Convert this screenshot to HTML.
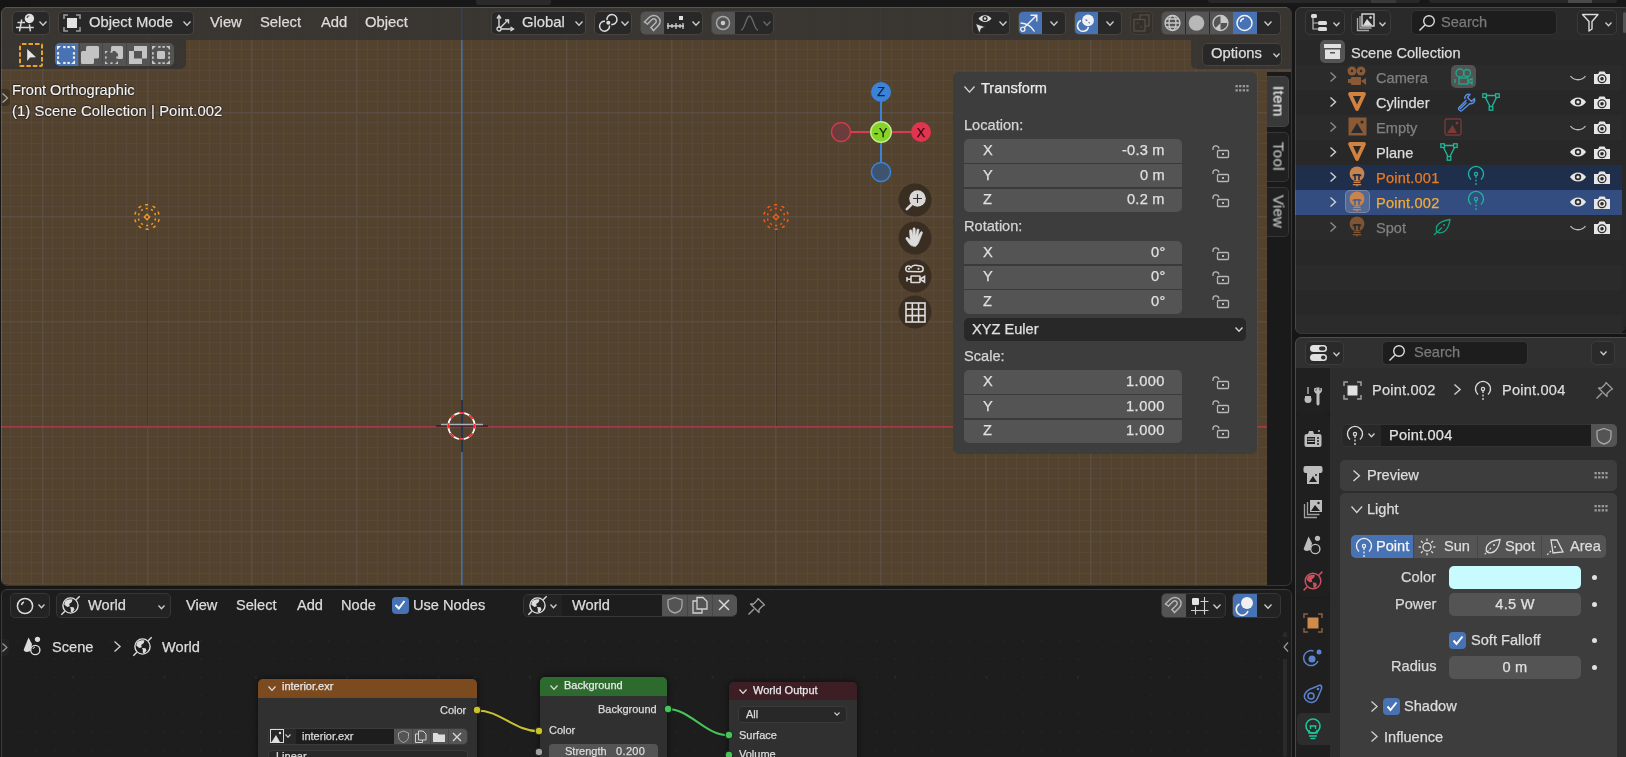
<!DOCTYPE html>
<html><head><meta charset="utf-8">
<style>
*{box-sizing:border-box;margin:0;padding:0}
html,body{width:1626px;height:757px;overflow:hidden;background:#161616;font-family:"Liberation Sans",sans-serif;color:#dcdcdc;font-size:14.8px}
.a{position:absolute}
.t{position:absolute;white-space:nowrap;line-height:1;will-change:transform;-webkit-text-stroke:0.25px currentColor}
svg{position:absolute;overflow:visible}
</style></head><body>
<div class="a" style="left:0px;top:0px;width:1626px;height:7px;background:#181818;"></div>
<div class="a" style="left:1px;top:7px;width:1290px;height:578px;border-radius:7px;overflow:hidden;background:#53422e"><svg width="1290" height="578" style="left:0;top:0"><rect x="9" y="0" width="1" height="578" fill="#57483a"/><rect x="20" y="0" width="1" height="578" fill="#57483a"/><rect x="30" y="0" width="1" height="578" fill="#57483a"/><rect x="51" y="0" width="1" height="578" fill="#57483a"/><rect x="62" y="0" width="1" height="578" fill="#57483a"/><rect x="72" y="0" width="1" height="578" fill="#57483a"/><rect x="83" y="0" width="1" height="578" fill="#57483a"/><rect x="93" y="0" width="1" height="578" fill="#57483a"/><rect x="104" y="0" width="1" height="578" fill="#57483a"/><rect x="114" y="0" width="1" height="578" fill="#57483a"/><rect x="125" y="0" width="1" height="578" fill="#57483a"/><rect x="135" y="0" width="1" height="578" fill="#57483a"/><rect x="156" y="0" width="1" height="578" fill="#57483a"/><rect x="167" y="0" width="1" height="578" fill="#57483a"/><rect x="177" y="0" width="1" height="578" fill="#57483a"/><rect x="188" y="0" width="1" height="578" fill="#57483a"/><rect x="198" y="0" width="1" height="578" fill="#57483a"/><rect x="208" y="0" width="1" height="578" fill="#57483a"/><rect x="219" y="0" width="1" height="578" fill="#57483a"/><rect x="229" y="0" width="1" height="578" fill="#57483a"/><rect x="240" y="0" width="1" height="578" fill="#57483a"/><rect x="261" y="0" width="1" height="578" fill="#57483a"/><rect x="271" y="0" width="1" height="578" fill="#57483a"/><rect x="282" y="0" width="1" height="578" fill="#57483a"/><rect x="292" y="0" width="1" height="578" fill="#57483a"/><rect x="303" y="0" width="1" height="578" fill="#57483a"/><rect x="313" y="0" width="1" height="578" fill="#57483a"/><rect x="324" y="0" width="1" height="578" fill="#57483a"/><rect x="334" y="0" width="1" height="578" fill="#57483a"/><rect x="345" y="0" width="1" height="578" fill="#57483a"/><rect x="366" y="0" width="1" height="578" fill="#57483a"/><rect x="376" y="0" width="1" height="578" fill="#57483a"/><rect x="387" y="0" width="1" height="578" fill="#57483a"/><rect x="397" y="0" width="1" height="578" fill="#57483a"/><rect x="408" y="0" width="1" height="578" fill="#57483a"/><rect x="418" y="0" width="1" height="578" fill="#57483a"/><rect x="429" y="0" width="1" height="578" fill="#57483a"/><rect x="439" y="0" width="1" height="578" fill="#57483a"/><rect x="450" y="0" width="1" height="578" fill="#57483a"/><rect x="470" y="0" width="1" height="578" fill="#57483a"/><rect x="481" y="0" width="1" height="578" fill="#57483a"/><rect x="491" y="0" width="1" height="578" fill="#57483a"/><rect x="502" y="0" width="1" height="578" fill="#57483a"/><rect x="512" y="0" width="1" height="578" fill="#57483a"/><rect x="523" y="0" width="1" height="578" fill="#57483a"/><rect x="533" y="0" width="1" height="578" fill="#57483a"/><rect x="544" y="0" width="1" height="578" fill="#57483a"/><rect x="554" y="0" width="1" height="578" fill="#57483a"/><rect x="575" y="0" width="1" height="578" fill="#57483a"/><rect x="586" y="0" width="1" height="578" fill="#57483a"/><rect x="596" y="0" width="1" height="578" fill="#57483a"/><rect x="607" y="0" width="1" height="578" fill="#57483a"/><rect x="617" y="0" width="1" height="578" fill="#57483a"/><rect x="628" y="0" width="1" height="578" fill="#57483a"/><rect x="638" y="0" width="1" height="578" fill="#57483a"/><rect x="649" y="0" width="1" height="578" fill="#57483a"/><rect x="659" y="0" width="1" height="578" fill="#57483a"/><rect x="680" y="0" width="1" height="578" fill="#57483a"/><rect x="691" y="0" width="1" height="578" fill="#57483a"/><rect x="701" y="0" width="1" height="578" fill="#57483a"/><rect x="712" y="0" width="1" height="578" fill="#57483a"/><rect x="722" y="0" width="1" height="578" fill="#57483a"/><rect x="732" y="0" width="1" height="578" fill="#57483a"/><rect x="743" y="0" width="1" height="578" fill="#57483a"/><rect x="753" y="0" width="1" height="578" fill="#57483a"/><rect x="764" y="0" width="1" height="578" fill="#57483a"/><rect x="785" y="0" width="1" height="578" fill="#57483a"/><rect x="795" y="0" width="1" height="578" fill="#57483a"/><rect x="806" y="0" width="1" height="578" fill="#57483a"/><rect x="816" y="0" width="1" height="578" fill="#57483a"/><rect x="827" y="0" width="1" height="578" fill="#57483a"/><rect x="837" y="0" width="1" height="578" fill="#57483a"/><rect x="848" y="0" width="1" height="578" fill="#57483a"/><rect x="858" y="0" width="1" height="578" fill="#57483a"/><rect x="869" y="0" width="1" height="578" fill="#57483a"/><rect x="890" y="0" width="1" height="578" fill="#57483a"/><rect x="900" y="0" width="1" height="578" fill="#57483a"/><rect x="911" y="0" width="1" height="578" fill="#57483a"/><rect x="921" y="0" width="1" height="578" fill="#57483a"/><rect x="932" y="0" width="1" height="578" fill="#57483a"/><rect x="942" y="0" width="1" height="578" fill="#57483a"/><rect x="953" y="0" width="1" height="578" fill="#57483a"/><rect x="963" y="0" width="1" height="578" fill="#57483a"/><rect x="974" y="0" width="1" height="578" fill="#57483a"/><rect x="994" y="0" width="1" height="578" fill="#57483a"/><rect x="1005" y="0" width="1" height="578" fill="#57483a"/><rect x="1015" y="0" width="1" height="578" fill="#57483a"/><rect x="1026" y="0" width="1" height="578" fill="#57483a"/><rect x="1036" y="0" width="1" height="578" fill="#57483a"/><rect x="1047" y="0" width="1" height="578" fill="#57483a"/><rect x="1057" y="0" width="1" height="578" fill="#57483a"/><rect x="1068" y="0" width="1" height="578" fill="#57483a"/><rect x="1078" y="0" width="1" height="578" fill="#57483a"/><rect x="1099" y="0" width="1" height="578" fill="#57483a"/><rect x="1110" y="0" width="1" height="578" fill="#57483a"/><rect x="1120" y="0" width="1" height="578" fill="#57483a"/><rect x="1131" y="0" width="1" height="578" fill="#57483a"/><rect x="1141" y="0" width="1" height="578" fill="#57483a"/><rect x="1152" y="0" width="1" height="578" fill="#57483a"/><rect x="1162" y="0" width="1" height="578" fill="#57483a"/><rect x="1173" y="0" width="1" height="578" fill="#57483a"/><rect x="1183" y="0" width="1" height="578" fill="#57483a"/><rect x="1204" y="0" width="1" height="578" fill="#57483a"/><rect x="1215" y="0" width="1" height="578" fill="#57483a"/><rect x="1225" y="0" width="1" height="578" fill="#57483a"/><rect x="1236" y="0" width="1" height="578" fill="#57483a"/><rect x="1246" y="0" width="1" height="578" fill="#57483a"/><rect x="1256" y="0" width="1" height="578" fill="#57483a"/><rect x="1267" y="0" width="1" height="578" fill="#57483a"/><rect x="1277" y="0" width="1" height="578" fill="#57483a"/><rect x="1288" y="0" width="1" height="578" fill="#57483a"/><rect x="0" y="10" width="1290" height="1" fill="#57483a"/><rect x="0" y="21" width="1290" height="1" fill="#57483a"/><rect x="0" y="31" width="1290" height="1" fill="#57483a"/><rect x="0" y="42" width="1290" height="1" fill="#57483a"/><rect x="0" y="52" width="1290" height="1" fill="#57483a"/><rect x="0" y="63" width="1290" height="1" fill="#57483a"/><rect x="0" y="73" width="1290" height="1" fill="#57483a"/><rect x="0" y="84" width="1290" height="1" fill="#57483a"/><rect x="0" y="94" width="1290" height="1" fill="#57483a"/><rect x="0" y="115" width="1290" height="1" fill="#57483a"/><rect x="0" y="126" width="1290" height="1" fill="#57483a"/><rect x="0" y="136" width="1290" height="1" fill="#57483a"/><rect x="0" y="147" width="1290" height="1" fill="#57483a"/><rect x="0" y="157" width="1290" height="1" fill="#57483a"/><rect x="0" y="167" width="1290" height="1" fill="#57483a"/><rect x="0" y="178" width="1290" height="1" fill="#57483a"/><rect x="0" y="188" width="1290" height="1" fill="#57483a"/><rect x="0" y="199" width="1290" height="1" fill="#57483a"/><rect x="0" y="220" width="1290" height="1" fill="#57483a"/><rect x="0" y="230" width="1290" height="1" fill="#57483a"/><rect x="0" y="241" width="1290" height="1" fill="#57483a"/><rect x="0" y="251" width="1290" height="1" fill="#57483a"/><rect x="0" y="262" width="1290" height="1" fill="#57483a"/><rect x="0" y="272" width="1290" height="1" fill="#57483a"/><rect x="0" y="283" width="1290" height="1" fill="#57483a"/><rect x="0" y="293" width="1290" height="1" fill="#57483a"/><rect x="0" y="304" width="1290" height="1" fill="#57483a"/><rect x="0" y="325" width="1290" height="1" fill="#57483a"/><rect x="0" y="335" width="1290" height="1" fill="#57483a"/><rect x="0" y="346" width="1290" height="1" fill="#57483a"/><rect x="0" y="356" width="1290" height="1" fill="#57483a"/><rect x="0" y="367" width="1290" height="1" fill="#57483a"/><rect x="0" y="377" width="1290" height="1" fill="#57483a"/><rect x="0" y="388" width="1290" height="1" fill="#57483a"/><rect x="0" y="398" width="1290" height="1" fill="#57483a"/><rect x="0" y="409" width="1290" height="1" fill="#57483a"/><rect x="0" y="429" width="1290" height="1" fill="#57483a"/><rect x="0" y="440" width="1290" height="1" fill="#57483a"/><rect x="0" y="450" width="1290" height="1" fill="#57483a"/><rect x="0" y="461" width="1290" height="1" fill="#57483a"/><rect x="0" y="471" width="1290" height="1" fill="#57483a"/><rect x="0" y="482" width="1290" height="1" fill="#57483a"/><rect x="0" y="492" width="1290" height="1" fill="#57483a"/><rect x="0" y="503" width="1290" height="1" fill="#57483a"/><rect x="0" y="513" width="1290" height="1" fill="#57483a"/><rect x="0" y="534" width="1290" height="1" fill="#57483a"/><rect x="0" y="545" width="1290" height="1" fill="#57483a"/><rect x="0" y="555" width="1290" height="1" fill="#57483a"/><rect x="0" y="566" width="1290" height="1" fill="#57483a"/><rect x="0" y="576" width="1290" height="1" fill="#57483a"/><rect x="0" y="587" width="1290" height="1" fill="#57483a"/><rect x="41" y="0" width="1.5" height="578" fill="#5a4e43"/><rect x="146" y="0" width="1.5" height="578" fill="#5a4e43"/><rect x="250" y="0" width="1.5" height="578" fill="#5a4e43"/><rect x="355" y="0" width="1.5" height="578" fill="#5a4e43"/><rect x="460" y="0" width="1.5" height="578" fill="#5a4e43"/><rect x="565" y="0" width="1.5" height="578" fill="#5a4e43"/><rect x="670" y="0" width="1.5" height="578" fill="#5a4e43"/><rect x="774" y="0" width="1.5" height="578" fill="#5a4e43"/><rect x="879" y="0" width="1.5" height="578" fill="#5a4e43"/><rect x="984" y="0" width="1.5" height="578" fill="#5a4e43"/><rect x="1089" y="0" width="1.5" height="578" fill="#5a4e43"/><rect x="1194" y="0" width="1.5" height="578" fill="#5a4e43"/><rect x="1298" y="0" width="1.5" height="578" fill="#5a4e43"/><rect x="0" y="0" width="1290" height="1.5" fill="#5a4e43"/><rect x="0" y="105" width="1290" height="1.5" fill="#5a4e43"/><rect x="0" y="209" width="1290" height="1.5" fill="#5a4e43"/><rect x="0" y="314" width="1290" height="1.5" fill="#5a4e43"/><rect x="0" y="419" width="1290" height="1.5" fill="#5a4e43"/><rect x="0" y="524" width="1290" height="1.5" fill="#5a4e43"/><rect x="460" y="0" width="1.6" height="578" fill="#4070a8"/><rect x="0" y="419" width="1290" height="1.5" fill="#a03c4c"/></svg></div>
<div class="a" style="left:476px;top:0px;width:75px;height:5px;background:#2a2a2a;border-radius:0 0 2px 2px;"></div>
<div class="a" style="left:0px;top:0px;width:31px;height:7px;background:#151515;"></div>
<div class="a" style="left:1208px;top:0px;width:212px;height:3px;background:#282828;border-radius:0 0 3px 3px;"></div>
<div class="a" style="left:1429px;top:0px;width:188px;height:3px;background:#282828;border-radius:0 0 3px 3px;"></div>
<div class="a" style="left:1371px;top:0px;width:25px;height:3px;background:#3a3a3a;"></div>
<div class="a" style="left:1568px;top:0px;width:24px;height:3px;background:#4a4a4a;"></div>
<div class="a" style="left:1px;top:7px;width:1290px;height:33px;background:rgba(49,49,49,0.74);border-radius:7px 7px 0 0;"></div>
<div class="a" style="left:12px;top:10.5px;width:38px;height:24px;background:#282828;border-radius:5px;border:1px solid #47443f;"></div>
<svg style="left:16px;top:13px;" width="20" height="20" viewBox="0 0 20 20"><g stroke="#d8d8d8" stroke-width="1.5" fill="none"><path d="M1.5 9.5 H9 M0 14.4 H17.8 M5.7 6.5 L3.5 18.4 M13.4 11.4 L14.4 18.4"/></g><circle cx="13.4" cy="5.5" r="4.7" fill="#e2e2e2"/><path d="M11 5 q0.3 -2 2.3 -2.3" stroke="#444" stroke-width="1.1" fill="none"/></svg>
<svg style="left:39px;top:21px;" width="8" height="4.8" viewBox="0 0 8 4.8"><path d="M0.5 0.5 L4.0 4.3 L7.5 0.5" fill="none" stroke="#cfcfcf" stroke-width="1.3"/></svg>
<div class="a" style="left:58px;top:10.5px;width:136px;height:24px;background:#282828;border-radius:5px;border:1px solid #47443f;"></div>
<svg style="left:63px;top:14px;" width="18" height="18" viewBox="0 0 18 18"><g fill="none" stroke="#9a9a9a" stroke-width="1.6"><path d="M1 5 V1 H5 M13 1 H17 V5 M17 13 V17 H13 M5 17 H1 V13"/></g><rect x="4" y="4" width="10" height="10" fill="#e2e2e2"/></svg>
<div class="t" style="left:89.0px;top:15.07px;font-size:14.8px;color:#dcdcdc;">Object Mode</div>
<svg style="left:183px;top:21px;" width="8" height="4.8" viewBox="0 0 8 4.8"><path d="M0.5 0.5 L4.0 4.3 L7.5 0.5" fill="none" stroke="#cfcfcf" stroke-width="1.3"/></svg>
<div class="t" style="left:210.0px;top:15.07px;font-size:14.8px;color:#dcdcdc;">View</div>
<div class="t" style="left:260.0px;top:15.07px;font-size:14.8px;color:#dcdcdc;">Select</div>
<div class="t" style="left:321.0px;top:15.07px;font-size:14.8px;color:#dcdcdc;">Add</div>
<div class="t" style="left:365.0px;top:15.07px;font-size:14.8px;color:#dcdcdc;">Object</div>
<div class="a" style="left:491px;top:10.5px;width:95px;height:24px;background:#282828;border-radius:5px;border:1px solid #47443f;"></div>
<svg style="left:496px;top:14px;" width="19" height="18" viewBox="0 0 19 18"><g stroke="#d8d8d8" stroke-width="1.4" fill="none"><path d="M3 15 V2 M3 15 H17 M3 15 L12 6"/><path d="M1 4.5 L3 1.5 L5 4.5 M14.5 13 L17.5 15 L14.5 17 M9 6 H12.5 V9.5"/></g><circle cx="3" cy="15" r="2" fill="#282828" stroke="#d8d8d8" stroke-width="1.3"/></svg>
<div class="t" style="left:522.0px;top:15.07px;font-size:14.8px;color:#dcdcdc;">Global</div>
<svg style="left:575px;top:21px;" width="8" height="4.8" viewBox="0 0 8 4.8"><path d="M0.5 0.5 L4.0 4.3 L7.5 0.5" fill="none" stroke="#cfcfcf" stroke-width="1.3"/></svg>
<div class="a" style="left:594px;top:10.5px;width:38px;height:24px;background:#282828;border-radius:5px;border:1px solid #47443f;"></div>
<svg style="left:599px;top:14px;" width="19" height="18" viewBox="0 0 19 18"><g stroke="#dcdcdc" stroke-width="1.5" fill="none"><path d="M8 6.2 A5 5 0 1 1 12.2 10.5"/><path d="M10.5 11.5 A5 5 0 1 1 6 7.2"/></g><circle cx="9.3" cy="8.8" r="2" fill="#dcdcdc"/></svg>
<svg style="left:621px;top:21px;" width="8" height="4.8" viewBox="0 0 8 4.8"><path d="M0.5 0.5 L4.0 4.3 L7.5 0.5" fill="none" stroke="#cfcfcf" stroke-width="1.3"/></svg>
<div class="a" style="left:640px;top:10.5px;width:63px;height:24px;background:#282828;border-radius:5px;border:1px solid #47443f;"></div>
<div class="a" style="left:641px;top:11.5px;width:23px;height:22px;background:#545454;border-radius:4px 0 0 4px;"></div>
<svg style="left:643px;top:14px;" width="19" height="18" viewBox="0 0 19 18"><g transform="translate(19,0) scale(-1,1)"><path d="M8.5 16.5 L3.8 11.8 C1 9 1.5 5 4 3 C6.5 0.8 10.5 1 13 3.5 L17.5 8 M11 13.5 L6.5 9 C5.5 8 5.5 6.5 6.5 5.5 C7.5 4.5 9 4.5 10 5.5 L14.5 10" fill="none" stroke="#b4b4b4" stroke-width="1.5" stroke-linecap="round"/><path d="M8.5 16.5 L11 13.5 M17.5 8 L14.5 10" stroke="#b4b4b4" stroke-width="1.5" stroke-linecap="round"/></g></svg>
<svg style="left:666px;top:14px;" width="19" height="18" viewBox="0 0 19 18"><g stroke="#d0d0d0" stroke-width="1.3" fill="none"><path d="M1 12 H18 M2 9 V15 M6 10 V14 M10 9 V15 M14 10 V14 M17 9 V15"/></g><rect x="13" y="2" width="4" height="4" fill="#e0e0e0"/></svg>
<svg style="left:692px;top:21px;" width="8" height="4.8" viewBox="0 0 8 4.8"><path d="M0.5 0.5 L4.0 4.3 L7.5 0.5" fill="none" stroke="#cfcfcf" stroke-width="1.3"/></svg>
<div class="a" style="left:711px;top:10.5px;width:63px;height:24px;background:#282828;border-radius:5px;border:1px solid #47443f;"></div>
<div class="a" style="left:712px;top:11.5px;width:23px;height:22px;background:#545454;border-radius:4px 0 0 4px;"></div>
<svg style="left:714px;top:14px;" width="18" height="18" viewBox="0 0 18 18"><circle cx="9" cy="9" r="6.5" fill="none" stroke="#a8a8a8" stroke-width="1.5"/><circle cx="9" cy="9" r="2.3" fill="#c8c8c8"/></svg>
<svg style="left:740px;top:14px;" width="19" height="18" viewBox="0 0 19 18"><path d="M1 16 C5 16 6 2 9.5 2 C13 2 14 16 18 16" fill="none" stroke="#6a6a6a" stroke-width="1.4"/></svg>
<svg style="left:763px;top:21px;" width="8" height="4.8" viewBox="0 0 8 4.8"><path d="M0.5 0.5 L4.0 4.3 L7.5 0.5" fill="none" stroke="#6a6a6a" stroke-width="1.3"/></svg>
<div class="a" style="left:972px;top:10.5px;width:38px;height:24px;background:#282828;border-radius:5px;border:1px solid #47443f;"></div>
<svg style="left:975px;top:13px;" width="20" height="20" viewBox="0 0 20 20"><path d="M3.5 5.5 C6.5 1 13.5 1 16.5 5.5 C13.5 10 6.5 10 3.5 5.5 Z" fill="#dcdcdc"/><circle cx="10" cy="5.5" r="2.6" fill="#282828"/><circle cx="10" cy="5.5" r="1.2" fill="#dcdcdc"/><path d="M0.5 10.5 L10.5 14 L6.3 15.5 L4.3 20.5 Z" fill="#dcdcdc" stroke="#282828" stroke-width="0.8"/></svg>
<svg style="left:999px;top:21px;" width="8" height="4.8" viewBox="0 0 8 4.8"><path d="M0.5 0.5 L4.0 4.3 L7.5 0.5" fill="none" stroke="#cfcfcf" stroke-width="1.3"/></svg>
<div class="a" style="left:1018px;top:10.5px;width:48px;height:24px;background:#282828;border-radius:5px;border:1px solid #47443f;"></div>
<div class="a" style="left:1019px;top:11.5px;width:23px;height:22px;background:#4772b3;border-radius:4px 0 0 4px;"></div>
<svg style="left:1021px;top:14px;" width="18" height="18" viewBox="0 0 18 18"><g stroke="#f0f0f0" stroke-width="1.4" fill="none"><path d="M-0.5 9 A17 17 0 0 1 13.5 17.5"/><path d="M3.3 13.5 L15.5 1.5 M9.5 1.2 H15.8 V7.5"/></g><circle cx="1.8" cy="15.2" r="2.1" fill="#4772b3" stroke="#f0f0f0" stroke-width="1.3"/></svg>
<svg style="left:1050px;top:21px;" width="8" height="4.8" viewBox="0 0 8 4.8"><path d="M0.5 0.5 L4.0 4.3 L7.5 0.5" fill="none" stroke="#cfcfcf" stroke-width="1.3"/></svg>
<div class="a" style="left:1074px;top:10.5px;width:48px;height:24px;background:#282828;border-radius:5px;border:1px solid #47443f;"></div>
<div class="a" style="left:1075px;top:11.5px;width:23px;height:22px;background:#4772b3;border-radius:4px 0 0 4px;"></div>
<svg style="left:1076px;top:13px;" width="20" height="20" viewBox="0 0 20 20"><path d="M5 7.5 A5.6 5.6 0 1 0 12.5 14" fill="none" stroke="#f0f0f0" stroke-width="1.5"/><circle cx="12" cy="7.4" r="5.9" fill="#f0f0f0"/><path d="M9.5 6.5 l1.8 1.2 M12.5 9.5 l1.5 0.5" stroke="#4772b3" stroke-width="1.1"/></svg>
<svg style="left:1106px;top:21px;" width="8" height="4.8" viewBox="0 0 8 4.8"><path d="M0.5 0.5 L4.0 4.3 L7.5 0.5" fill="none" stroke="#cfcfcf" stroke-width="1.3"/></svg>
<div class="a" style="left:1130px;top:10.5px;width:23px;height:24px;background:#35302a;border-radius:5px;border:1px solid #423e39;"></div>
<svg style="left:1133px;top:14px;" width="17" height="18" viewBox="0 0 17 18"><g fill="none" stroke="#55514c" stroke-width="1.2"><path d="M7 5 V1 H16 V12 H12"/><rect x="1" y="5.5" width="11" height="11.5"/></g><g fill="#55514c"><rect x="4" y="8.5" width="1.3" height="1.3"/><rect x="7.5" y="12.5" width="1.3" height="1.3"/></g></svg>
<div class="a" style="left:1161px;top:10.5px;width:120px;height:24px;background:#282828;border-radius:5px;border:1px solid #47443f;"></div>
<div class="a" style="left:1162px;top:11.5px;width:23px;height:22px;background:#545454;border-radius:4px 0 0 4px;"></div>
<div class="a" style="left:1186px;top:11.5px;width:23px;height:22px;background:#545454;"></div>
<div class="a" style="left:1210px;top:11.5px;width:23px;height:22px;background:#545454;"></div>
<div class="a" style="left:1233px;top:11.5px;width:24px;height:22px;background:#4772b3;"></div>
<svg style="left:1163px;top:14px;" width="19" height="18" viewBox="0 0 19 18"><g fill="none" stroke="#c8c8c8" stroke-width="1.3"><circle cx="9.5" cy="9" r="7.5"/><ellipse cx="9.5" cy="9" rx="3.5" ry="7.5"/><path d="M2 9 H17 M3 5 H16 M3 13 H16"/></g></svg>
<svg style="left:1187px;top:14px;" width="19" height="18" viewBox="0 0 19 18"><circle cx="9.5" cy="9" r="7.8" fill="#b8b8b8"/></svg>
<svg style="left:1211px;top:14px;" width="19" height="18" viewBox="0 0 19 18"><circle cx="9.5" cy="9" r="7.5" fill="none" stroke="#c8c8c8" stroke-width="1.3"/><path d="M9.5 1.5 V9 H17 A7.5 7.5 0 0 0 9.5 1.5Z M9.5 9 L4 14.5 A7.5 7.5 0 0 0 9.5 16.5 Z" fill="#c8c8c8"/></svg>
<svg style="left:1235px;top:14px;" width="19" height="18" viewBox="0 0 19 18"><circle cx="9.5" cy="9" r="7.5" fill="none" stroke="#f4f4f4" stroke-width="1.5"/><path d="M5.5 8 A4 4 0 0 1 9 4.5" fill="none" stroke="#f4f4f4" stroke-width="1.5"/></svg>
<svg style="left:1264px;top:21px;" width="8" height="4.8" viewBox="0 0 8 4.8"><path d="M0.5 0.5 L4.0 4.3 L7.5 0.5" fill="none" stroke="#cfcfcf" stroke-width="1.3"/></svg>
<div class="a" style="left:1px;top:40px;width:185px;height:29px;background:rgba(49,49,49,0.74);border-radius:0 0 6px 0;"></div>
<svg style="left:19px;top:43px;" width="24" height="24" viewBox="0 0 24 24"><rect x="1" y="1" width="22" height="22" rx="1" fill="none" stroke="#e9a12a" stroke-width="2" stroke-dasharray="4.5 2" stroke-dashoffset="-1"/><path d="M8.2 6 V18 L11 14.5 L17 14.3 Z" fill="#e6e6e6"/></svg>
<div class="a" style="left:55px;top:43px;width:119px;height:23px;background:#545454;border-radius:5px;"></div>
<div class="a" style="left:55px;top:43px;width:23px;height:23px;background:#4772b3;border-radius:5px 0 0 5px;"></div>
<div class="a" style="left:78.7px;top:43px;width:1px;height:23px;background:#474747;"></div>
<div class="a" style="left:102.4px;top:43px;width:1px;height:23px;background:#474747;"></div>
<div class="a" style="left:126.1px;top:43px;width:1px;height:23px;background:#474747;"></div>
<div class="a" style="left:149.8px;top:43px;width:1px;height:23px;background:#474747;"></div>
<svg style="left:57px;top:46px;" width="18" height="18" viewBox="0 0 18 18"><path d="M0 0 H4.0 L0 4.0 Z" fill="#f0f0f0"/><path d="M18 0 V4.0 L14.0 0 Z" fill="#f0f0f0"/><path d="M18 18 H14.0 L18 14.0 Z" fill="#f0f0f0"/><path d="M0 18 V14.0 L4.0 18 Z" fill="#f0f0f0"/><rect x="6.20" y="0" width="2.40" height="2.1" fill="#f0f0f0"/><rect x="6.20" y="15.90" width="2.40" height="2.1" fill="#f0f0f0"/><rect x="0" y="6.20" width="2.1" height="2.40" fill="#f0f0f0"/><rect x="15.90" y="6.20" width="2.1" height="2.40" fill="#f0f0f0"/><rect x="10.40" y="0" width="2.40" height="2.1" fill="#f0f0f0"/><rect x="10.40" y="15.90" width="2.40" height="2.1" fill="#f0f0f0"/><rect x="0" y="10.40" width="2.1" height="2.40" fill="#f0f0f0"/><rect x="15.90" y="10.40" width="2.1" height="2.40" fill="#f0f0f0"/></svg>
<svg style="left:81px;top:46px;" width="18" height="18" viewBox="0 0 18 18"><path d="M5 1.5 Q5 0 6.5 0 H16.5 Q18 0 18 1.5 V11 Q18 12.5 16.5 12.5 H13 V16.5 Q13 18 11.5 18 H1.5 Q0 18 0 16.5 V6.5 Q0 5 1.5 5 H5 Z" fill="#c4c4c4"/></svg>
<svg style="left:105px;top:46px;" width="18" height="18" viewBox="0 0 18 18"><path d="M6 1.5 Q6 0 7.5 0 H16.5 Q18 0 18 1.5 V11.5 Q18 13 16.5 13 H13 V5 H6 Z" fill="#c4c4c4"/><g transform="translate(0,5)"><path d="M0 0 H3.0 L0 3.0 Z" fill="#c4c4c4"/><path d="M13 0 V3.0 L10.0 0 Z" fill="#c4c4c4"/><path d="M13 13 H10.0 L13 10.0 Z" fill="#c4c4c4"/><path d="M0 13 V10.0 L3.0 13 Z" fill="#c4c4c4"/><rect x="5.42" y="0" width="2.17" height="1.7" fill="#c4c4c4"/><rect x="5.42" y="11.30" width="2.17" height="1.7" fill="#c4c4c4"/><rect x="0" y="5.42" width="1.7" height="2.17" fill="#c4c4c4"/><rect x="11.30" y="5.42" width="1.7" height="2.17" fill="#c4c4c4"/></g></svg>
<svg style="left:129px;top:46px;" width="18" height="18" viewBox="0 0 18 18"><path d="M5 0 H18 V12.5 H13 V5 H5 Z M0 5 H5 V12.5 H13 V18 H0 Z" fill="#c4c4c4"/></svg>
<svg style="left:152px;top:46px;" width="18" height="18" viewBox="0 0 18 18"><path d="M0 0 H4.0 L0 4.0 Z" fill="#c4c4c4"/><path d="M18 0 V4.0 L14.0 0 Z" fill="#c4c4c4"/><path d="M18 18 H14.0 L18 14.0 Z" fill="#c4c4c4"/><path d="M0 18 V14.0 L4.0 18 Z" fill="#c4c4c4"/><rect x="6.20" y="0" width="2.40" height="1.8" fill="#c4c4c4"/><rect x="6.20" y="16.20" width="2.40" height="1.8" fill="#c4c4c4"/><rect x="0" y="6.20" width="1.8" height="2.40" fill="#c4c4c4"/><rect x="16.20" y="6.20" width="1.8" height="2.40" fill="#c4c4c4"/><rect x="10.40" y="0" width="2.40" height="1.8" fill="#c4c4c4"/><rect x="10.40" y="16.20" width="2.40" height="1.8" fill="#c4c4c4"/><rect x="0" y="10.40" width="1.8" height="2.40" fill="#c4c4c4"/><rect x="16.20" y="10.40" width="1.8" height="2.40" fill="#c4c4c4"/><rect x="5" y="5" width="8" height="8" rx="1.2" fill="#c4c4c4"/></svg>
<div class="a" style="left:1191px;top:40px;width:100px;height:29px;background:rgba(49,49,49,0.74);border-radius:0 0 0 6px;"></div>
<div class="a" style="left:1202px;top:43px;width:80px;height:23px;background:#282828;border-radius:5px;border:1px solid #47443f;"></div>
<div class="t" style="left:1211.0px;top:46.47px;font-size:14.8px;color:#dcdcdc;">Options</div>
<svg style="left:1273px;top:53px;" width="7" height="4.2" viewBox="0 0 7 4.2"><path d="M0.5 0.5 L3.5 3.7 L6.5 0.5" fill="none" stroke="#cfcfcf" stroke-width="1.3"/></svg>
<div class="t" style="left:12.0px;top:82.64px;font-size:14.6px;color:#f4f4f4;text-shadow:0 0 1px #000,0 0 1px #000,0 0 2px #000;-webkit-text-stroke:0.2px #f4f4f4">Front Orthographic</div>
<div class="t" style="left:12.0px;top:104.17px;font-size:14.8px;color:#f4f4f4;letter-spacing:0.08px;text-shadow:0 0 1px #000,0 0 1px #000,0 0 2px #000;-webkit-text-stroke:0.2px #f4f4f4">(1) Scene Collection | Point.002</div>
<div class="a" style="left:1px;top:89px;width:9px;height:16.5px;background:rgba(30,24,18,0.35);border-radius:0 4px 4px 0;"></div>
<svg style="left:1.5px;top:92.5px;" width="6.0" height="10" viewBox="0 0 6.0 10"><path d="M0.5 0.5 L5.5 5.0 L0.5 9.5" fill="none" stroke="#a8a8a8" stroke-width="1.3"/></svg>
<svg style="left:830px;top:80px;" width="102" height="104" viewBox="0 0 102 104">
<line x1="51" y1="12" x2="51" y2="92" stroke="#3a83d8" stroke-width="2"/>
<line x1="11" y1="52" x2="91" y2="52" stroke="#d83a55" stroke-width="2"/>
<circle cx="11" cy="52" r="9.5" fill="#6a3c3c" stroke="#d03a50" stroke-width="1.5"/>
<circle cx="51" cy="92" r="9.5" fill="#3d5470" stroke="#3a83d8" stroke-width="1.5"/>
<circle cx="51" cy="12" r="10" fill="#3a83d8"/>
<circle cx="91" cy="52" r="10" fill="#e0344f"/>
<circle cx="51" cy="52" r="10.3" fill="#86d42a" stroke="#c4ee8a" stroke-width="1.4"/>
</svg>
<div class="t" style="left:581.0px;width:600px;text-align:center;top:86.42px;font-size:12.5px;color:#10203a;">Z</div>
<div class="t" style="left:621.0px;width:600px;text-align:center;top:127.42px;font-size:12.5px;color:#300810;">X</div>
<div class="t" style="left:581.0px;width:600px;text-align:center;top:127.22px;font-size:12.5px;color:#142206;letter-spacing:0.8px">-Y</div>
<svg style="left:898px;top:183px;" width="34" height="34" viewBox="0 0 34 34"><circle cx="17" cy="17" r="16.5" fill="#3a2e22"/></svg>
<svg style="left:898px;top:220.5px;" width="34" height="34" viewBox="0 0 34 34"><circle cx="17" cy="17" r="16.5" fill="#3a2e22"/></svg>
<svg style="left:898px;top:258.5px;" width="34" height="34" viewBox="0 0 34 34"><circle cx="17" cy="17" r="16.5" fill="#3a2e22"/></svg>
<svg style="left:898px;top:295px;" width="34" height="34" viewBox="0 0 34 34"><circle cx="17" cy="17" r="16.5" fill="#3a2e22"/></svg>
<svg style="left:904px;top:188px;" width="24" height="24" viewBox="0 0 24 24"><circle cx="13.5" cy="10.5" r="8.3" fill="#d8d8d8"/><path d="M13.5 6.1 V14.9 M9.1 10.5 H17.9" stroke="#3a2e22" stroke-width="1.1"/><path d="M7.5 16.5 L2.8 21.2" stroke="#d8d8d8" stroke-width="2.6" stroke-linecap="round"/></svg>
<svg style="left:904px;top:226px;" width="24" height="24" viewBox="0 0 24 24"><g fill="#dcdcdc" stroke="#dcdcdc" stroke-linecap="round" stroke-linejoin="round"><path d="M7 19.5 C5 17.5 3.5 15.5 2 13 C1.3 11.8 2.8 10.8 3.8 11.6 L6.2 14 L5.5 5 C5.4 3.6 7.6 3.4 7.8 4.8 L8.6 10.5 L9 2.8 C9 1.3 11.2 1.3 11.2 2.8 L11.4 10.2 L13 3.8 C13.3 2.4 15.3 2.8 15 4.2 L13.8 10.8 L16.5 6.2 C17.2 5 19 5.8 18.4 7.1 L15.5 14.5 C14.5 17.5 13 19.5 11.5 20.5 Z" stroke-width="0.6"/></g></svg>
<svg style="left:904px;top:263px;" width="24" height="24" viewBox="0 0 24 24"><g fill="none" stroke="#dcdcdc" stroke-width="1.6"><path d="M4 8.5 C1 8.5 1 3 4.5 3 C6 3 6.5 4 7 4.5 C8 2.5 10 2 12 2.3 L16.5 3 C20 3.5 20 8.8 16.5 8.8 Z"/><rect x="7" y="13" width="9" height="6.5" rx="0.5"/><path d="M16 16.2 L20.5 13.5 V19 Z M3 14 V18.5 M3 16.2 H7"/></g><circle cx="5" cy="5.8" r="1.1" fill="#dcdcdc"/><circle cx="14.5" cy="5.8" r="1.1" fill="#dcdcdc"/></svg>
<svg style="left:905px;top:302px;" width="21" height="21" viewBox="0 0 21 21"><g fill="none" stroke="#dcdcdc" stroke-width="1.6"><rect x="1" y="1" width="19" height="19"/><path d="M7.3 1 V20 M13.6 1 V20 M1 7.3 H20 M1 13.6 H20"/></g></svg>
<div class="a" style="left:146.8px;top:230px;width:1px;height:196px;background:#45382a;"></div>
<div class="a" style="left:775.6px;top:230px;width:1px;height:196px;background:#45382a;"></div>
<svg style="left:133px;top:202.5px;" width="28" height="28" viewBox="0 0 28 28"><g transform="rotate(-99 14 14)"><circle cx="14" cy="14" r="12.3" fill="none" stroke="#f29a22" stroke-width="1.5" stroke-dasharray="3.1 4.63"/>
<circle cx="14" cy="14" r="8.6" fill="none" stroke="#f29a22" stroke-width="1.5" stroke-dasharray="2.2 3.2"/></g>
<rect x="12.1" y="12.1" width="3.8" height="3.8" transform="rotate(45 14 14)" fill="none" stroke="#f29a22" stroke-width="1.4"/></svg>
<svg style="left:762px;top:202.5px;" width="28" height="28" viewBox="0 0 28 28"><g transform="rotate(-99 14 14)"><circle cx="14" cy="14" r="12.3" fill="none" stroke="#ee5c18" stroke-width="1.5" stroke-dasharray="3.1 4.63"/>
<circle cx="14" cy="14" r="8.6" fill="none" stroke="#ee5c18" stroke-width="1.5" stroke-dasharray="2.2 3.2"/></g>
<rect x="12.1" y="12.1" width="3.8" height="3.8" transform="rotate(45 14 14)" fill="none" stroke="#ee5c18" stroke-width="1.4"/></svg>
<svg style="left:436px;top:400px;" width="52" height="52" viewBox="0 0 52 52">
<line x1="26" y1="0" x2="26" y2="52" stroke="#1d2a40" stroke-width="1.6"/>
<line x1="0" y1="26" x2="52" y2="26" stroke="#3a1d24" stroke-width="1.6"/>
<line x1="5" y1="24.5" x2="47" y2="24.5" stroke="#a6b4ba" stroke-width="1.6"/>
<circle cx="25.5" cy="26" r="13.2" fill="none" stroke="#ffffff" stroke-width="1.7"/>
<circle cx="25.5" cy="26" r="13.2" fill="none" stroke="#ff2020" stroke-width="1.7" stroke-dasharray="5.18 5.18" stroke-dashoffset="2.6"/>
</svg>
<div class="a" style="left:1267px;top:72px;width:24px;height:513px;background:#1a1a1a;"></div>
<div class="a" style="left:1267px;top:76px;width:22px;height:51px;background:#393939;border-radius:0 5px 5px 0;border:1px solid #444;border-left:none;"></div>
<div class="a" style="left:1267px;top:131.5px;width:22px;height:50px;background:#202020;border-radius:0 5px 5px 0;border:1px solid #363636;border-left:none;"></div>
<div class="a" style="left:1267px;top:186.5px;width:22px;height:50px;background:#202020;border-radius:0 5px 5px 0;border:1px solid #363636;border-left:none;"></div>
<div class="t" style="left:979.0px;width:600px;text-align:center;top:93.80px;font-size:15px;color:#e6e6e6;transform:rotate(90deg);letter-spacing:0.4px">Item</div>
<div class="t" style="left:979.0px;width:600px;text-align:center;top:149.30px;font-size:15px;color:#bdbdbd;transform:rotate(90deg);letter-spacing:0.4px">Tool</div>
<div class="t" style="left:979.0px;width:600px;text-align:center;top:204.30px;font-size:15px;color:#bdbdbd;transform:rotate(90deg);letter-spacing:0.2px">View</div>
<div class="a" style="left:953px;top:72px;width:304px;height:382px;background:#3d3d3d;border-radius:6px;"></div>
<svg style="left:963.5px;top:85.5px;" width="11" height="6.6" viewBox="0 0 11 6.6"><path d="M0.5 0.5 L5.5 6.1 L10.5 0.5" fill="none" stroke="#d8d8d8" stroke-width="1.3"/></svg>
<div class="t" style="left:981.0px;top:80.64px;font-size:14.6px;color:#ececec;">Transform</div>
<svg style="left:1235px;top:85px;" width="14" height="7" viewBox="0 0 14 7"><rect x="0.5" y="0.0" width="2.3" height="2.3" fill="#9a9a9a"/><rect x="0.5" y="4.2" width="2.3" height="2.3" fill="#9a9a9a"/><rect x="4.1" y="0.0" width="2.3" height="2.3" fill="#9a9a9a"/><rect x="4.1" y="4.2" width="2.3" height="2.3" fill="#9a9a9a"/><rect x="7.7" y="0.0" width="2.3" height="2.3" fill="#9a9a9a"/><rect x="7.7" y="4.2" width="2.3" height="2.3" fill="#9a9a9a"/><rect x="11.3" y="0.0" width="2.3" height="2.3" fill="#9a9a9a"/><rect x="11.3" y="4.2" width="2.3" height="2.3" fill="#9a9a9a"/></svg>
<div class="t" style="left:964.0px;top:117.64px;font-size:14.6px;color:#d4d4d4;">Location:</div>
<div class="t" style="left:964.0px;top:219.44px;font-size:14.6px;color:#d4d4d4;">Rotation:</div>
<div class="t" style="left:964.0px;top:348.64px;font-size:14.6px;color:#d4d4d4;">Scale:</div>
<div class="a" style="left:964px;top:139px;width:218px;height:73.3px;background:#545454;border-radius:5px;"></div>
<div class="t" style="left:983.0px;top:143.24px;font-size:14.6px;color:#e0e0e0;">X</div>
<div class="t" style="right:461.0px;top:143.24px;font-size:14.6px;color:#e0e0e0;letter-spacing:0.20px;">-0.3 m</div>
<svg style="left:1211px;top:144.0px;" width="19" height="14" viewBox="0 0 19 14"><path d="M2 6 V4.5 C2 1.5 7 0.5 8 4.5" fill="none" stroke="#b8b8b8" stroke-width="1.3"/><rect x="6.5" y="6.5" width="11" height="7" fill="none" stroke="#b8b8b8" stroke-width="1.3" rx="1"/><rect x="11" y="9" width="2" height="2" fill="#b8b8b8"/></svg>
<div class="a" style="left:964px;top:162.9px;width:218px;height:1.3px;background:#3a3a3a;"></div>
<div class="t" style="left:983.0px;top:167.64px;font-size:14.6px;color:#e0e0e0;">Y</div>
<div class="t" style="right:461.0px;top:167.64px;font-size:14.6px;color:#e0e0e0;letter-spacing:0.20px;">0 m</div>
<svg style="left:1211px;top:168.4px;" width="19" height="14" viewBox="0 0 19 14"><path d="M2 6 V4.5 C2 1.5 7 0.5 8 4.5" fill="none" stroke="#b8b8b8" stroke-width="1.3"/><rect x="6.5" y="6.5" width="11" height="7" fill="none" stroke="#b8b8b8" stroke-width="1.3" rx="1"/><rect x="11" y="9" width="2" height="2" fill="#b8b8b8"/></svg>
<div class="a" style="left:964px;top:187.3px;width:218px;height:1.3px;background:#3a3a3a;"></div>
<div class="t" style="left:983.0px;top:192.04px;font-size:14.6px;color:#e0e0e0;">Z</div>
<div class="t" style="right:461.0px;top:192.04px;font-size:14.6px;color:#e0e0e0;letter-spacing:0.24px;">0.2 m</div>
<svg style="left:1211px;top:192.8px;" width="19" height="14" viewBox="0 0 19 14"><path d="M2 6 V4.5 C2 1.5 7 0.5 8 4.5" fill="none" stroke="#b8b8b8" stroke-width="1.3"/><rect x="6.5" y="6.5" width="11" height="7" fill="none" stroke="#b8b8b8" stroke-width="1.3" rx="1"/><rect x="11" y="9" width="2" height="2" fill="#b8b8b8"/></svg>
<div class="a" style="left:964px;top:240.5px;width:218px;height:73.3px;background:#545454;border-radius:5px;"></div>
<div class="t" style="left:983.0px;top:244.74px;font-size:14.6px;color:#e0e0e0;">X</div>
<div class="t" style="right:460.9px;top:244.74px;font-size:14.6px;color:#e0e0e0;letter-spacing:0.30px;">0°</div>
<svg style="left:1211px;top:245.5px;" width="19" height="14" viewBox="0 0 19 14"><path d="M2 6 V4.5 C2 1.5 7 0.5 8 4.5" fill="none" stroke="#b8b8b8" stroke-width="1.3"/><rect x="6.5" y="6.5" width="11" height="7" fill="none" stroke="#b8b8b8" stroke-width="1.3" rx="1"/><rect x="11" y="9" width="2" height="2" fill="#b8b8b8"/></svg>
<div class="a" style="left:964px;top:264.4px;width:218px;height:1.3px;background:#3a3a3a;"></div>
<div class="t" style="left:983.0px;top:269.14px;font-size:14.6px;color:#e0e0e0;">Y</div>
<div class="t" style="right:460.9px;top:269.14px;font-size:14.6px;color:#e0e0e0;letter-spacing:0.30px;">0°</div>
<svg style="left:1211px;top:269.9px;" width="19" height="14" viewBox="0 0 19 14"><path d="M2 6 V4.5 C2 1.5 7 0.5 8 4.5" fill="none" stroke="#b8b8b8" stroke-width="1.3"/><rect x="6.5" y="6.5" width="11" height="7" fill="none" stroke="#b8b8b8" stroke-width="1.3" rx="1"/><rect x="11" y="9" width="2" height="2" fill="#b8b8b8"/></svg>
<div class="a" style="left:964px;top:288.8px;width:218px;height:1.3px;background:#3a3a3a;"></div>
<div class="t" style="left:983.0px;top:293.54px;font-size:14.6px;color:#e0e0e0;">Z</div>
<div class="t" style="right:460.9px;top:293.54px;font-size:14.6px;color:#e0e0e0;letter-spacing:0.30px;">0°</div>
<svg style="left:1211px;top:294.3px;" width="19" height="14" viewBox="0 0 19 14"><path d="M2 6 V4.5 C2 1.5 7 0.5 8 4.5" fill="none" stroke="#b8b8b8" stroke-width="1.3"/><rect x="6.5" y="6.5" width="11" height="7" fill="none" stroke="#b8b8b8" stroke-width="1.3" rx="1"/><rect x="11" y="9" width="2" height="2" fill="#b8b8b8"/></svg>
<div class="a" style="left:964px;top:370px;width:218px;height:73.3px;background:#545454;border-radius:5px;"></div>
<div class="t" style="left:983.0px;top:374.24px;font-size:14.6px;color:#e0e0e0;">X</div>
<div class="t" style="right:460.7px;top:374.24px;font-size:14.6px;color:#e0e0e0;letter-spacing:0.48px;">1.000</div>
<svg style="left:1211px;top:375.0px;" width="19" height="14" viewBox="0 0 19 14"><path d="M2 6 V4.5 C2 1.5 7 0.5 8 4.5" fill="none" stroke="#b8b8b8" stroke-width="1.3"/><rect x="6.5" y="6.5" width="11" height="7" fill="none" stroke="#b8b8b8" stroke-width="1.3" rx="1"/><rect x="11" y="9" width="2" height="2" fill="#b8b8b8"/></svg>
<div class="a" style="left:964px;top:393.9px;width:218px;height:1.3px;background:#3a3a3a;"></div>
<div class="t" style="left:983.0px;top:398.64px;font-size:14.6px;color:#e0e0e0;">Y</div>
<div class="t" style="right:460.7px;top:398.64px;font-size:14.6px;color:#e0e0e0;letter-spacing:0.48px;">1.000</div>
<svg style="left:1211px;top:399.4px;" width="19" height="14" viewBox="0 0 19 14"><path d="M2 6 V4.5 C2 1.5 7 0.5 8 4.5" fill="none" stroke="#b8b8b8" stroke-width="1.3"/><rect x="6.5" y="6.5" width="11" height="7" fill="none" stroke="#b8b8b8" stroke-width="1.3" rx="1"/><rect x="11" y="9" width="2" height="2" fill="#b8b8b8"/></svg>
<div class="a" style="left:964px;top:418.3px;width:218px;height:1.3px;background:#3a3a3a;"></div>
<div class="t" style="left:983.0px;top:423.04px;font-size:14.6px;color:#e0e0e0;">Z</div>
<div class="t" style="right:460.7px;top:423.04px;font-size:14.6px;color:#e0e0e0;letter-spacing:0.48px;">1.000</div>
<svg style="left:1211px;top:423.8px;" width="19" height="14" viewBox="0 0 19 14"><path d="M2 6 V4.5 C2 1.5 7 0.5 8 4.5" fill="none" stroke="#b8b8b8" stroke-width="1.3"/><rect x="6.5" y="6.5" width="11" height="7" fill="none" stroke="#b8b8b8" stroke-width="1.3" rx="1"/><rect x="11" y="9" width="2" height="2" fill="#b8b8b8"/></svg>
<div class="a" style="left:964px;top:318px;width:282px;height:23px;background:#282828;border-radius:5px;"></div>
<div class="t" style="left:972.0px;top:321.64px;font-size:14.6px;color:#e0e0e0;">XYZ Euler</div>
<svg style="left:1235px;top:327px;" width="8" height="4.8" viewBox="0 0 8 4.8"><path d="M0.5 0.5 L4.0 4.3 L7.5 0.5" fill="none" stroke="#d8d8d8" stroke-width="1.3"/></svg>
<div class="a" style="left:1295px;top:7px;width:331px;height:326px;background:#282828;border-radius:7px 0 7px 7px;"></div>
<div class="a" style="left:1295px;top:7px;width:331px;height:33px;background:#2a2a2a;border-radius:7px 0 0 0;"></div>
<div class="a" style="left:1305px;top:10px;width:40px;height:25px;background:#282828;border-radius:5px;border:1px solid #3a3a3a;"></div>
<svg style="left:1310px;top:13px;" width="22" height="19" viewBox="0 0 22 19"><g fill="#dcdcdc"><rect x="1" y="1" width="6" height="4" rx="1.5"/><rect x="8" y="8" width="9" height="4" rx="1.5"/><rect x="8" y="14" width="9" height="4" rx="1.5"/></g><path d="M3 5 V16 H8 M3 10 H8" fill="none" stroke="#bdbdbd" stroke-width="1.2"/></svg>
<svg style="left:1333px;top:22px;" width="7" height="4.2" viewBox="0 0 7 4.2"><path d="M0.5 0.5 L3.5 3.7 L6.5 0.5" fill="none" stroke="#cfcfcf" stroke-width="1.3"/></svg>
<div class="a" style="left:1351px;top:10px;width:40px;height:25px;background:#282828;border-radius:5px;border:1px solid #3a3a3a;"></div>
<svg style="left:1356px;top:13px;" width="20" height="19" viewBox="0 0 20 19"><g fill="none" stroke="#a8a8a8" stroke-width="1.3"><path d="M1.5 5 V17.5 H13"/><path d="M4 3 V15 H15.5"/></g><rect x="6" y="1" width="12" height="12" fill="#282828" stroke="#dcdcdc" stroke-width="1.4"/><path d="M7 12.5 L11 6 L16.5 12.5 Z" fill="#dcdcdc"/><circle cx="14.5" cy="4.5" r="1.3" fill="#dcdcdc"/></svg>
<svg style="left:1379px;top:22px;" width="7" height="4.2" viewBox="0 0 7 4.2"><path d="M0.5 0.5 L3.5 3.7 L6.5 0.5" fill="none" stroke="#cfcfcf" stroke-width="1.3"/></svg>
<div class="a" style="left:1411px;top:10px;width:146px;height:25px;background:#1d1d1d;border-radius:5px;border:1px solid #333;"></div>
<svg style="left:1418px;top:14px;" width="18" height="18" viewBox="0 0 18 18"><circle cx="11" cy="7" r="5.3" fill="none" stroke="#dcdcdc" stroke-width="1.4"/><path d="M7 11 L1.5 16.5" stroke="#dcdcdc" stroke-width="1.5"/></svg>
<div class="t" style="left:1441.0px;top:15.14px;font-size:14.6px;color:#7a7a7a;">Search</div>
<div class="a" style="left:1577px;top:10px;width:40px;height:25px;background:#282828;border-radius:5px;border:1px solid #3a3a3a;"></div>
<svg style="left:1581px;top:13px;" width="20" height="19" viewBox="0 0 20 19"><path d="M1.5 1.5 H17 L11 8.5 V16 L8 18 V8.5 Z" fill="none" stroke="#dcdcdc" stroke-width="1.4" stroke-linejoin="round"/></svg>
<svg style="left:1605px;top:22px;" width="7" height="4.2" viewBox="0 0 7 4.2"><path d="M0.5 0.5 L3.5 3.7 L6.5 0.5" fill="none" stroke="#cfcfcf" stroke-width="1.3"/></svg>
<div class="a" style="left:1623px;top:12px;width:3px;height:21px;background:#555555;border-radius:2px;"></div>
<div class="a" style="left:1295px;top:64.5px;width:327px;height:25px;background:#2b2b2b;"></div>
<div class="a" style="left:1295px;top:89.5px;width:327px;height:25px;background:#282828;"></div>
<div class="a" style="left:1295px;top:114.5px;width:327px;height:25px;background:#2b2b2b;"></div>
<div class="a" style="left:1295px;top:139.5px;width:327px;height:25px;background:#282828;"></div>
<div class="a" style="left:1295px;top:164.5px;width:327px;height:25px;background:#2b2b2b;"></div>
<div class="a" style="left:1295px;top:189.5px;width:327px;height:25px;background:#282828;"></div>
<div class="a" style="left:1295px;top:214.5px;width:327px;height:25px;background:#2b2b2b;"></div>
<div class="a" style="left:1295px;top:239.5px;width:327px;height:25px;background:#282828;"></div>
<div class="a" style="left:1295px;top:264.5px;width:327px;height:25px;background:#2b2b2b;"></div>
<div class="a" style="left:1295px;top:289.5px;width:327px;height:25px;background:#282828;"></div>
<div class="a" style="left:1295px;top:314.5px;width:327px;height:18.5px;background:#2b2b2b;border-radius:0 0 0 6px;"></div>
<div class="a" style="left:1295px;top:164.5px;width:327px;height:25px;background:#1f2f4b;"></div>
<div class="a" style="left:1295px;top:189.5px;width:327px;height:25px;background:#334d80;"></div>
<div class="a" style="left:1320px;top:40px;width:25px;height:23px;background:#545454;border-radius:5px;"></div>
<svg style="left:1323px;top:43px;" width="19" height="17" viewBox="0 0 19 17"><rect x="1" y="1" width="17" height="4" fill="#e0e0e0"/><rect x="2" y="6.5" width="15" height="9.5" fill="#e0e0e0"/><rect x="7" y="9" width="5" height="1.5" fill="#545454"/></svg>
<div class="t" style="left:1350.5px;top:45.64px;font-size:14.6px;color:#dcdcdc;">Scene Collection</div>
<svg style="left:1330px;top:72px;" width="6.0" height="10" viewBox="0 0 6.0 10"><path d="M0.5 0.5 L5.5 5.0 L0.5 9.5" fill="none" stroke="#8a8a8a" stroke-width="1.4"/></svg>
<div class="t" style="left:1375.5px;top:71.04px;font-size:14.6px;color:#808080;">Camera</div>
<svg style="left:1569px;top:72px;" width="18" height="12" viewBox="0 0 18 12"><path d="M1.5 4 C5 9 13 9 16.5 4" fill="none" stroke="#bdbdbd" stroke-width="1.3"/></svg>
<svg style="left:1593px;top:70px;" width="18" height="15" viewBox="0 0 18 15"><path d="M1 4 H5 L6.5 1.5 H11.5 L13 4 H17 V14 H1 Z" fill="#e6e6e6"/><circle cx="9" cy="8.8" r="3.9" fill="none" stroke="#2a2a2a" stroke-width="1.3"/><circle cx="9" cy="8.8" r="1.8" fill="#2a2a2a"/></svg>
<svg style="left:1330px;top:97px;" width="6.0" height="10" viewBox="0 0 6.0 10"><path d="M0.5 0.5 L5.5 5.0 L0.5 9.5" fill="none" stroke="#d0d0d0" stroke-width="1.4"/></svg>
<div class="t" style="left:1375.5px;top:96.04px;font-size:14.6px;color:#dcdcdc;">Cylinder</div>
<svg style="left:1569px;top:96px;" width="18" height="12" viewBox="0 0 18 12"><path d="M1 6 C5 0 13 0 17 6 C13 12 5 12 1 6 Z" fill="#e6e6e6"/><circle cx="9" cy="6" r="3.2" fill="#2a2a2a"/><circle cx="9" cy="6" r="1.6" fill="#e6e6e6"/></svg>
<svg style="left:1593px;top:95px;" width="18" height="15" viewBox="0 0 18 15"><path d="M1 4 H5 L6.5 1.5 H11.5 L13 4 H17 V14 H1 Z" fill="#e6e6e6"/><circle cx="9" cy="8.8" r="3.9" fill="none" stroke="#2a2a2a" stroke-width="1.3"/><circle cx="9" cy="8.8" r="1.8" fill="#2a2a2a"/></svg>
<svg style="left:1330px;top:122px;" width="6.0" height="10" viewBox="0 0 6.0 10"><path d="M0.5 0.5 L5.5 5.0 L0.5 9.5" fill="none" stroke="#8a8a8a" stroke-width="1.4"/></svg>
<div class="t" style="left:1375.5px;top:121.04px;font-size:14.6px;color:#808080;">Empty</div>
<svg style="left:1569px;top:122px;" width="18" height="12" viewBox="0 0 18 12"><path d="M1.5 4 C5 9 13 9 16.5 4" fill="none" stroke="#bdbdbd" stroke-width="1.3"/></svg>
<svg style="left:1593px;top:120px;" width="18" height="15" viewBox="0 0 18 15"><path d="M1 4 H5 L6.5 1.5 H11.5 L13 4 H17 V14 H1 Z" fill="#e6e6e6"/><circle cx="9" cy="8.8" r="3.9" fill="none" stroke="#2a2a2a" stroke-width="1.3"/><circle cx="9" cy="8.8" r="1.8" fill="#2a2a2a"/></svg>
<svg style="left:1330px;top:147px;" width="6.0" height="10" viewBox="0 0 6.0 10"><path d="M0.5 0.5 L5.5 5.0 L0.5 9.5" fill="none" stroke="#d0d0d0" stroke-width="1.4"/></svg>
<div class="t" style="left:1375.5px;top:146.04px;font-size:14.6px;color:#dcdcdc;">Plane</div>
<svg style="left:1569px;top:146px;" width="18" height="12" viewBox="0 0 18 12"><path d="M1 6 C5 0 13 0 17 6 C13 12 5 12 1 6 Z" fill="#e6e6e6"/><circle cx="9" cy="6" r="3.2" fill="#2a2a2a"/><circle cx="9" cy="6" r="1.6" fill="#e6e6e6"/></svg>
<svg style="left:1593px;top:145px;" width="18" height="15" viewBox="0 0 18 15"><path d="M1 4 H5 L6.5 1.5 H11.5 L13 4 H17 V14 H1 Z" fill="#e6e6e6"/><circle cx="9" cy="8.8" r="3.9" fill="none" stroke="#2a2a2a" stroke-width="1.3"/><circle cx="9" cy="8.8" r="1.8" fill="#2a2a2a"/></svg>
<svg style="left:1330px;top:172px;" width="6.0" height="10" viewBox="0 0 6.0 10"><path d="M0.5 0.5 L5.5 5.0 L0.5 9.5" fill="none" stroke="#d0d0d0" stroke-width="1.4"/></svg>
<div class="t" style="left:1375.5px;top:171.04px;font-size:14.6px;color:#ec7a1c;letter-spacing:0.20px;">Point.001</div>
<svg style="left:1569px;top:171px;" width="18" height="12" viewBox="0 0 18 12"><path d="M1 6 C5 0 13 0 17 6 C13 12 5 12 1 6 Z" fill="#e6e6e6"/><circle cx="9" cy="6" r="3.2" fill="#2a2a2a"/><circle cx="9" cy="6" r="1.6" fill="#e6e6e6"/></svg>
<svg style="left:1593px;top:170px;" width="18" height="15" viewBox="0 0 18 15"><path d="M1 4 H5 L6.5 1.5 H11.5 L13 4 H17 V14 H1 Z" fill="#e6e6e6"/><circle cx="9" cy="8.8" r="3.9" fill="none" stroke="#2a2a2a" stroke-width="1.3"/><circle cx="9" cy="8.8" r="1.8" fill="#2a2a2a"/></svg>
<svg style="left:1330px;top:197px;" width="6.0" height="10" viewBox="0 0 6.0 10"><path d="M0.5 0.5 L5.5 5.0 L0.5 9.5" fill="none" stroke="#d0d0d0" stroke-width="1.4"/></svg>
<div class="t" style="left:1375.5px;top:196.04px;font-size:14.6px;color:#f4ac32;letter-spacing:0.20px;">Point.002</div>
<svg style="left:1569px;top:196px;" width="18" height="12" viewBox="0 0 18 12"><path d="M1 6 C5 0 13 0 17 6 C13 12 5 12 1 6 Z" fill="#e6e6e6"/><circle cx="9" cy="6" r="3.2" fill="#2a2a2a"/><circle cx="9" cy="6" r="1.6" fill="#e6e6e6"/></svg>
<svg style="left:1593px;top:195px;" width="18" height="15" viewBox="0 0 18 15"><path d="M1 4 H5 L6.5 1.5 H11.5 L13 4 H17 V14 H1 Z" fill="#e6e6e6"/><circle cx="9" cy="8.8" r="3.9" fill="none" stroke="#2a2a2a" stroke-width="1.3"/><circle cx="9" cy="8.8" r="1.8" fill="#2a2a2a"/></svg>
<svg style="left:1330px;top:222px;" width="6.0" height="10" viewBox="0 0 6.0 10"><path d="M0.5 0.5 L5.5 5.0 L0.5 9.5" fill="none" stroke="#8a8a8a" stroke-width="1.4"/></svg>
<div class="t" style="left:1375.5px;top:221.04px;font-size:14.6px;color:#808080;">Spot</div>
<svg style="left:1569px;top:222px;" width="18" height="12" viewBox="0 0 18 12"><path d="M1.5 4 C5 9 13 9 16.5 4" fill="none" stroke="#bdbdbd" stroke-width="1.3"/></svg>
<svg style="left:1593px;top:220px;" width="18" height="15" viewBox="0 0 18 15"><path d="M1 4 H5 L6.5 1.5 H11.5 L13 4 H17 V14 H1 Z" fill="#e6e6e6"/><circle cx="9" cy="8.8" r="3.9" fill="none" stroke="#2a2a2a" stroke-width="1.3"/><circle cx="9" cy="8.8" r="1.8" fill="#2a2a2a"/></svg>
<svg style="left:1347px;top:66px;" width="20" height="22" viewBox="0 0 20 22"><g fill="#8a5a36"><circle cx="5" cy="5" r="4.5"/><circle cx="14" cy="5" r="4.5"/><rect x="4" y="11" width="10" height="8" rx="1"/><path d="M14 15 L19 12 V19Z M1 13 H4 V17 H1Z"/></g><circle cx="5" cy="5" r="1.2" fill="#2b2b2b"/><circle cx="14" cy="5" r="1.2" fill="#2b2b2b"/></svg>
<svg style="left:1348px;top:92px;" width="18" height="19" viewBox="0 0 18 19"><path d="M2 2 H16 L9 17 Z" fill="none" stroke="#d0823e" stroke-width="3.8" stroke-linejoin="round"/></svg>
<svg style="left:1348px;top:117px;" width="19" height="19" viewBox="0 0 19 19"><rect x="0.5" y="0.5" width="18" height="18" fill="#8a5a36"/><path d="M3 16 L9 6 L15 16 Z" fill="#2b2b2b"/><circle cx="14" cy="5" r="1.6" fill="#2b2b2b"/></svg>
<svg style="left:1348px;top:142px;" width="18" height="19" viewBox="0 0 18 19"><path d="M2 2 H16 L9 17 Z" fill="none" stroke="#d0823e" stroke-width="3.8" stroke-linejoin="round"/></svg>
<svg style="left:1348px;top:166px;" width="18" height="21" viewBox="0 0 18 21"><circle cx="9" cy="7.8" r="7.4" fill="#c8844c"/><path d="M3.2 12.3 L5.3 14.3 H12.7 L14.8 12.3 Z" fill="#c8844c"/><path d="M5.2 10.2 Q5.2 8.9 6.5 8.9 H11.5 Q12.8 8.9 12.8 10.2 M7 8.9 V14.3 M11 8.9 V14.3" stroke="#1f2f4b" stroke-width="1.6" fill="none"/><rect x="5.5" y="15.6" width="7" height="1.4" fill="#c8844c"/><rect x="4.8" y="18" width="8.4" height="1.3" fill="#c8844c"/><path d="M7.5 19.2 L9 20.8 L10.5 19.2Z" fill="#c8844c"/></svg>
<div class="a" style="left:1345px;top:190px;width:25px;height:23px;background:rgba(255,255,255,0.16);border-radius:5px;border:1px solid rgba(255,255,255,0.2);"></div>
<svg style="left:1348px;top:191px;" width="18" height="21" viewBox="0 0 18 21"><circle cx="9" cy="7.8" r="7.4" fill="#c8844c"/><path d="M3.2 12.3 L5.3 14.3 H12.7 L14.8 12.3 Z" fill="#c8844c"/><path d="M5.2 10.2 Q5.2 8.9 6.5 8.9 H11.5 Q12.8 8.9 12.8 10.2 M7 8.9 V14.3 M11 8.9 V14.3" stroke="#4a6290" stroke-width="1.6" fill="none"/><rect x="5.5" y="15.6" width="7" height="1.4" fill="#c8844c"/><rect x="4.8" y="18" width="8.4" height="1.3" fill="#c8844c"/><path d="M7.5 19.2 L9 20.8 L10.5 19.2Z" fill="#c8844c"/></svg>
<svg style="left:1348px;top:216px;" width="18" height="21" viewBox="0 0 18 21"><circle cx="9" cy="7.8" r="7.4" fill="#7e5434"/><path d="M3.2 12.3 L5.3 14.3 H12.7 L14.8 12.3 Z" fill="#7e5434"/><path d="M5.2 10.2 Q5.2 8.9 6.5 8.9 H11.5 Q12.8 8.9 12.8 10.2 M7 8.9 V14.3 M11 8.9 V14.3" stroke="#2b2b2b" stroke-width="1.6" fill="none"/><rect x="5.5" y="15.6" width="7" height="1.4" fill="#7e5434"/><rect x="4.8" y="18" width="8.4" height="1.3" fill="#7e5434"/><path d="M7.5 19.2 L9 20.8 L10.5 19.2Z" fill="#7e5434"/></svg>
<div class="a" style="left:1451px;top:65px;width:25px;height:23px;background:#545454;border-radius:5px;"></div>
<svg style="left:1454px;top:68px;" width="19" height="17" viewBox="0 0 19 17"><g fill="none" stroke="#1fa98c" stroke-width="1.3"><circle cx="6" cy="5" r="4"/><circle cx="13" cy="5" r="3.5"/><rect x="5" y="10" width="9" height="6"/><path d="M14 13 L18 10.5 V16Z M1 11 V15"/></g></svg>
<svg style="left:1457px;top:93px;" width="19" height="19" viewBox="0 0 19 19"><path d="M3 16 L9.5 9.5 M8 6 C7 3 10 0.5 13 1.5 L10.5 4.5 L14.5 8.5 L17.5 5.5 C18.5 8.5 16 11.5 13 10.5 L5 17.5 C3.5 19 0.5 16 2 14.5 L9.5 7" fill="none" stroke="#5a8ee0" stroke-width="1.4" stroke-linejoin="round"/></svg>
<svg style="left:1482px;top:93px;" width="18" height="18" viewBox="0 0 18 18"><path d="M2.5 2.5 H15.5 L9 15.5 Z" fill="none" stroke="#1fb596" stroke-width="1.4"/><g fill="#282828" stroke="#1fb596" stroke-width="1.3"><rect x="0.8" y="0.8" width="3.6" height="3.6"/><rect x="13.6" y="0.8" width="3.6" height="3.6"/><rect x="7.2" y="13.6" width="3.6" height="3.6"/></g></svg>
<svg style="left:1444px;top:118px;" width="18" height="18" viewBox="0 0 18 18"><rect x="1" y="1" width="16" height="16" rx="1.5" fill="none" stroke="#7a3a3a" stroke-width="1.3"/><path d="M3 15 L8.5 7 L13 15 Z" fill="#7a3a3a"/><circle cx="13" cy="5" r="1.5" fill="#7a3a3a"/></svg>
<svg style="left:1440px;top:143px;" width="18" height="18" viewBox="0 0 18 18"><path d="M2.5 2.5 H15.5 L9 15.5 Z" fill="none" stroke="#1fb596" stroke-width="1.4"/><g fill="#282828" stroke="#1fb596" stroke-width="1.3"><rect x="0.8" y="0.8" width="3.6" height="3.6"/><rect x="13.6" y="0.8" width="3.6" height="3.6"/><rect x="7.2" y="13.6" width="3.6" height="3.6"/></g></svg>
<svg style="left:1467px;top:166px;" width="18" height="20" viewBox="0 0 18 20"><path d="M4 13.5 A7.5 7.5 0 1 1 14 13.5" fill="none" stroke="#1fb59a" stroke-width="1.4"/><circle cx="9" cy="8" r="1.6" fill="none" stroke="#1fb59a" stroke-width="1.2"/><path d="M9 10 V19" stroke="#1fb59a" stroke-width="1.3" stroke-dasharray="2 1.5"/></svg>
<svg style="left:1467px;top:191px;" width="18" height="20" viewBox="0 0 18 20"><path d="M4 13.5 A7.5 7.5 0 1 1 14 13.5" fill="none" stroke="#1fb59a" stroke-width="1.4"/><circle cx="9" cy="8" r="1.6" fill="none" stroke="#1fb59a" stroke-width="1.2"/><path d="M9 10 V19" stroke="#1fb59a" stroke-width="1.3" stroke-dasharray="2 1.5"/></svg>
<svg style="left:1433px;top:218px;" width="18" height="18" viewBox="0 0 18 18"><path d="M3.5 13.5 C2 8 6 3 17 1.5 C15.5 12 10.5 16 5 14.5 Z M9 9.5 L1 17" fill="none" stroke="#17a080" stroke-width="1.3" stroke-dasharray="12 0"/><circle cx="11" cy="7" r="1" fill="#17a080"/></svg>
<div class="a" style="left:1295px;top:337px;width:331px;height:420px;background:#2d2d2d;border-radius:7px 0 0 0;"></div>
<div class="a" style="left:1295px;top:337px;width:331px;height:31px;background:#303030;border-radius:7px 0 0 0;"></div>
<div class="a" style="left:1305px;top:340.5px;width:39px;height:24px;background:#2a2a2a;border-radius:5px;border:1px solid #3c3c3c;"></div>
<svg style="left:1309px;top:344px;" width="22" height="18" viewBox="0 0 22 18"><g fill="#e0e0e0"><rect x="1" y="1" width="17" height="7" rx="3.5"/><rect x="1" y="10" width="17" height="7" rx="3.5"/></g><rect x="10" y="2.5" width="6.5" height="4" rx="2" fill="#303030"/><rect x="12" y="11.5" width="4.5" height="4" rx="2" fill="#303030"/></svg>
<svg style="left:1333px;top:352px;" width="7" height="4.2" viewBox="0 0 7 4.2"><path d="M0.5 0.5 L3.5 3.7 L6.5 0.5" fill="none" stroke="#cfcfcf" stroke-width="1.3"/></svg>
<div class="a" style="left:1382px;top:340.5px;width:146px;height:24px;background:#1d1d1d;border-radius:5px;border:1px solid #363636;"></div>
<svg style="left:1388px;top:344px;" width="18" height="18" viewBox="0 0 18 18"><circle cx="11" cy="7" r="5.3" fill="none" stroke="#dcdcdc" stroke-width="1.4"/><path d="M7 11 L1.5 16.5" stroke="#dcdcdc" stroke-width="1.5"/></svg>
<div class="t" style="left:1414.0px;top:345.14px;font-size:14.6px;color:#7a7a7a;">Search</div>
<div class="a" style="left:1591px;top:340.5px;width:24px;height:24px;background:#2a2a2a;border-radius:5px;border:1px solid #3c3c3c;"></div>
<svg style="left:1599.5px;top:351px;" width="7" height="4.2" viewBox="0 0 7 4.2"><path d="M0.5 0.5 L3.5 3.7 L6.5 0.5" fill="none" stroke="#cfcfcf" stroke-width="1.3"/></svg>
<div class="a" style="left:1296px;top:368px;width:34px;height:389px;background:#1d1d1d;"></div>
<div class="a" style="left:1296px;top:368px;width:34px;height:46px;background:#202020;border-radius:0 0 5px 5px;"></div>
<div class="a" style="left:1296px;top:414px;width:34px;height:183px;background:#1f1f1f;border-radius:5px 5px 5px 5px;"></div>
<div class="a" style="left:1296px;top:599px;width:34px;height:158px;background:#1f1f1f;border-radius:5px 5px 0 0;"></div>
<div class="a" style="left:1297px;top:713px;width:33px;height:32px;background:#2d2d2d;border-radius:5px 0 0 5px;"></div>
<svg style="left:1302.5px;top:386px;" width="20" height="20" viewBox="0 0 20 20"><path d="M5 1 V8" stroke="#bdbdbd" stroke-width="1.3"/><circle cx="5" cy="13.5" r="3.5" fill="#bdbdbd"/><path d="M2 10 H8 V13 H2Z" fill="#bdbdbd"/><path d="M12 2 C11 4 11.5 7 14 7.5 V18 C14 19.5 16 19.5 16 18 V7.5 C18.5 7 19 4 18 2 V5 H16 V1.5 M14 1.5 V5 H12" fill="#bdbdbd" stroke="#bdbdbd" stroke-width="1"/></svg>
<svg style="left:1302.5px;top:429px;" width="20" height="20" viewBox="0 0 20 20"><rect x="1.5" y="5" width="17" height="13" rx="2" fill="#bdbdbd"/><rect x="4" y="8" width="8" height="7" fill="#1f1f1f"/><path d="M4.5 10 H11.5 M4.5 12.5 H11.5" stroke="#bdbdbd" stroke-width="1"/><circle cx="15" cy="9" r="1" fill="#1f1f1f"/><circle cx="15" cy="12" r="1" fill="#1f1f1f"/><circle cx="15" cy="15" r="1" fill="#1f1f1f"/><path d="M5 5 L6 2 H10 L11 5" fill="#bdbdbd"/><circle cx="16" cy="2" r="1" fill="#bdbdbd"/></svg>
<svg style="left:1302.5px;top:465px;" width="20" height="20" viewBox="0 0 20 20"><rect x="0.5" y="1" width="19" height="7" rx="2" fill="#bdbdbd"/><rect x="4" y="6" width="12" height="13" fill="#bdbdbd"/><path d="M6 17 L10 11 L14 17 Z" fill="#1f1f1f"/><circle cx="13" cy="10" r="1" fill="#1f1f1f"/></svg>
<svg style="left:1302.5px;top:499px;" width="20" height="20" viewBox="0 0 20 20"><g fill="none" stroke="#a0a0a0" stroke-width="1.3"><path d="M1.5 5 V18.5 H14"/><path d="M4.5 3 V15.5 H16.5"/></g><rect x="7" y="1" width="12" height="12" fill="#bdbdbd"/><path d="M8 12 L12 6 L17 12Z" fill="#1f1f1f"/><circle cx="15.5" cy="4" r="1.2" fill="#1f1f1f"/></svg>
<svg style="left:1302.5px;top:535px;" width="20" height="20" viewBox="0 0 20 20"><path d="M5.5 1.5 L0.8 13.5 C0.5 15 2 16 4 16 L7.5 15 L9 8 Z" fill="#bdbdbd"/><circle cx="12.3" cy="14" r="4.6" fill="#1f1f1f" stroke="#bdbdbd" stroke-width="1.4"/><circle cx="14.5" cy="3.3" r="2.6" fill="#bdbdbd"/></svg>
<svg style="left:1302.5px;top:571px;" width="20" height="20" viewBox="0 0 20 20"><circle cx="10" cy="10" r="7.8" fill="none" stroke="#c8525e" stroke-width="1.5"/><path d="M4.5 6 C6.5 3.5 9.5 3.3 12 4.1 L11.3 6.5 L8.7 8.5 L9.3 10.7 L6.8 11.5 L3.7 9Z M9.5 11.5 L13 11.8 L14 14 L11.8 17.1 L10.3 16.3 L10.3 13.5Z" fill="#c8525e"/><path d="M0.6 19.4 L4.2 15.8 M15.8 4.2 L19.4 0.6" stroke="#c8525e" stroke-width="1.5"/></svg>
<svg style="left:1302.5px;top:613px;" width="20" height="20" viewBox="0 0 20 20"><g fill="none" stroke="#8a6040" stroke-width="1.5"><path d="M1 5 V1 H5 M15 1 H19 V5 M19 15 V19 H15 M5 19 H1 V15"/></g><rect x="4.5" y="4.5" width="11" height="11" fill="#d08a4a"/></svg>
<svg style="left:1302.5px;top:648px;" width="20" height="20" viewBox="0 0 20 20"><path d="M15 13 A7.5 7.5 0 1 1 10.5 3" fill="none" stroke="#5a84d0" stroke-width="1.5"/><circle cx="9" cy="11" r="3.5" fill="#5a84d0"/><circle cx="16" cy="4" r="2.5" fill="#5a84d0"/></svg>
<svg style="left:1302.5px;top:684px;" width="20" height="20" viewBox="0 0 20 20"><path d="M3 16 C-1 12 3 6 10 4 L17 1 C19 2 19 4 18 6 L15 13 C13 19 7 20 3 16Z" fill="none" stroke="#5a84d0" stroke-width="1.5"/><circle cx="8" cy="12" r="3" fill="none" stroke="#5a84d0" stroke-width="1.5"/><circle cx="15" cy="5" r="1.3" fill="#5a84d0"/></svg>
<svg style="left:1302.5px;top:718px;" width="20" height="22" viewBox="0 0 20 22"><circle cx="10" cy="8" r="7" fill="none" stroke="#19c79a" stroke-width="1.6"/><path d="M6 12 V15 H14 V12" fill="none" stroke="#19c79a" stroke-width="1.6"/><path d="M6.5 8 H13.5 M7.5 8 V11 M12.5 8 V11" stroke="#19c79a" stroke-width="1.3"/><path d="M6 18 H14 M7.5 20.5 H12.5" stroke="#19c79a" stroke-width="1.5"/></svg>
<svg style="left:1343px;top:381px;" width="19" height="19" viewBox="0 0 19 19"><g fill="none" stroke="#a0a0a0" stroke-width="1.5"><path d="M1 5 V1 H5 M14 1 H18 V5 M18 14 V18 H14 M5 18 H1 V14"/></g><rect x="4.5" y="4.5" width="10" height="10" fill="#e0e0e0"/></svg>
<div class="t" style="left:1372.4px;top:382.94px;font-size:14.6px;color:#dcdcdc;letter-spacing:0.20px;">Point.002</div>
<svg style="left:1454px;top:384px;" width="6.6" height="11" viewBox="0 0 6.6 11"><path d="M0.5 0.5 L6.1 5.5 L0.5 10.5" fill="none" stroke="#d0d0d0" stroke-width="1.4"/></svg>
<svg style="left:1474px;top:381px;" width="18" height="20" viewBox="0 0 18 20"><path d="M4 13.5 A7.5 7.5 0 1 1 14 13.5" fill="none" stroke="#dcdcdc" stroke-width="1.4"/><circle cx="9" cy="8" r="1.6" fill="none" stroke="#dcdcdc" stroke-width="1.2"/><path d="M9 10 V19" stroke="#dcdcdc" stroke-width="1.3" stroke-dasharray="2 1.5"/></svg>
<div class="t" style="left:1502.3px;top:382.94px;font-size:14.6px;color:#dcdcdc;letter-spacing:0.20px;">Point.004</div>
<svg style="left:1595px;top:381px;" width="19" height="19" viewBox="0 0 19 19"><path d="M11 1.5 L17.5 8 L15.5 9 L12 12.5 L12 15.5 L3.5 7 L6.5 7 L10 3.5Z" fill="none" stroke="#9a9a9a" stroke-width="1.3" stroke-linejoin="round"/><path d="M7 12 L1.5 17.5" stroke="#9a9a9a" stroke-width="1.4"/></svg>
<div class="a" style="left:1340.5px;top:424px;width:276px;height:23px;background:#282828;border-radius:5px;border:1px solid #333;"></div>
<div class="a" style="left:1381px;top:425px;width:210px;height:21px;background:#1d1d1d;"></div>
<div class="a" style="left:1591px;top:424px;width:25.5px;height:23px;background:#545454;border-radius:0 5px 5px 0;"></div>
<svg style="left:1346px;top:426px;" width="18" height="20" viewBox="0 0 18 20"><path d="M4 13.5 A7.5 7.5 0 1 1 14 13.5" fill="none" stroke="#dcdcdc" stroke-width="1.4"/><circle cx="9" cy="8" r="1.6" fill="none" stroke="#dcdcdc" stroke-width="1.2"/><path d="M9 10 V19" stroke="#dcdcdc" stroke-width="1.3" stroke-dasharray="2 1.5"/></svg>
<svg style="left:1368px;top:433px;" width="7" height="4.2" viewBox="0 0 7 4.2"><path d="M0.5 0.5 L3.5 3.7 L6.5 0.5" fill="none" stroke="#cfcfcf" stroke-width="1.3"/></svg>
<div class="t" style="left:1389.0px;top:428.14px;font-size:14.6px;color:#e0e0e0;letter-spacing:0.20px;">Point.004</div>
<svg style="left:1595px;top:427px;" width="18" height="18" viewBox="0 0 18 18"><path d="M9 1.5 L16 4 V9 C16 13 13 16 9 17 C5 16 2 13 2 9 V4 Z" fill="none" stroke="#a8a8a8" stroke-width="1.3"/></svg>
<div class="a" style="left:1340px;top:460px;width:276.5px;height:31px;background:#3d3d3d;border-radius:5px;"></div>
<svg style="left:1353px;top:470.2px;" width="6.96" height="11.6" viewBox="0 0 6.96 11.6"><path d="M0.5 0.5 L6.46 5.8 L0.5 11.1" fill="none" stroke="#d8d8d8" stroke-width="1.3"/></svg>
<div class="t" style="left:1367.3px;top:468.14px;font-size:14.6px;color:#dcdcdc;">Preview</div>
<svg style="left:1594px;top:472px;" width="14" height="7" viewBox="0 0 14 7"><rect x="0.5" y="0.0" width="2.3" height="2.3" fill="#9a9a9a"/><rect x="0.5" y="4.2" width="2.3" height="2.3" fill="#9a9a9a"/><rect x="4.1" y="0.0" width="2.3" height="2.3" fill="#9a9a9a"/><rect x="4.1" y="4.2" width="2.3" height="2.3" fill="#9a9a9a"/><rect x="7.7" y="0.0" width="2.3" height="2.3" fill="#9a9a9a"/><rect x="7.7" y="4.2" width="2.3" height="2.3" fill="#9a9a9a"/><rect x="11.3" y="0.0" width="2.3" height="2.3" fill="#9a9a9a"/><rect x="11.3" y="4.2" width="2.3" height="2.3" fill="#9a9a9a"/></svg>
<div class="a" style="left:1340px;top:493px;width:276.5px;height:264px;background:#3d3d3d;border-radius:5px 5px 0 0;"></div>
<svg style="left:1350.5px;top:506px;" width="11.6" height="6.96" viewBox="0 0 11.6 6.96"><path d="M0.5 0.5 L5.8 6.46 L11.1 0.5" fill="none" stroke="#d8d8d8" stroke-width="1.3"/></svg>
<div class="t" style="left:1366.9px;top:501.64px;font-size:14.6px;color:#dcdcdc;">Light</div>
<svg style="left:1594px;top:505px;" width="14" height="7" viewBox="0 0 14 7"><rect x="0.5" y="0.0" width="2.3" height="2.3" fill="#9a9a9a"/><rect x="0.5" y="4.2" width="2.3" height="2.3" fill="#9a9a9a"/><rect x="4.1" y="0.0" width="2.3" height="2.3" fill="#9a9a9a"/><rect x="4.1" y="4.2" width="2.3" height="2.3" fill="#9a9a9a"/><rect x="7.7" y="0.0" width="2.3" height="2.3" fill="#9a9a9a"/><rect x="7.7" y="4.2" width="2.3" height="2.3" fill="#9a9a9a"/><rect x="11.3" y="0.0" width="2.3" height="2.3" fill="#9a9a9a"/><rect x="11.3" y="4.2" width="2.3" height="2.3" fill="#9a9a9a"/></svg>
<div class="a" style="left:1351px;top:535px;width:254.6px;height:23px;background:#545454;border-radius:5px;"></div>
<div class="a" style="left:1351px;top:535px;width:62.4px;height:23px;background:#4772b3;border-radius:5px 0 0 5px;"></div>
<div class="a" style="left:1477px;top:535px;width:1px;height:23px;background:#474747;"></div>
<div class="a" style="left:1541px;top:535px;width:1px;height:23px;background:#474747;"></div>
<div class="a" style="left:1413.4px;top:535px;width:1px;height:23px;background:#474747;"></div>
<svg style="left:1355px;top:538px;" width="18" height="20" viewBox="0 0 18 20"><path d="M4 13.5 A7.5 7.5 0 1 1 14 13.5" fill="none" stroke="#f0f0f0" stroke-width="1.4"/><circle cx="9" cy="8" r="1.6" fill="none" stroke="#f0f0f0" stroke-width="1.2"/><path d="M9 10 V19" stroke="#f0f0f0" stroke-width="1.3" stroke-dasharray="2 1.5"/></svg>
<div class="t" style="left:1376.0px;top:539.14px;font-size:14.6px;color:#f4f4f4;">Point</div>
<svg style="left:1418px;top:538px;" width="18" height="18" viewBox="0 0 18 18"><circle cx="9" cy="9" r="4" fill="none" stroke="#dcdcdc" stroke-width="1.3"/><path d="M15.00 9.00 L17.50 9.00" stroke="#dcdcdc" stroke-width="1.3"/><path d="M13.24 13.24 L15.01 15.01" stroke="#dcdcdc" stroke-width="1.3"/><path d="M9.00 15.00 L9.00 17.50" stroke="#dcdcdc" stroke-width="1.3"/><path d="M4.76 13.24 L2.99 15.01" stroke="#dcdcdc" stroke-width="1.3"/><path d="M3.00 9.00 L0.50 9.00" stroke="#dcdcdc" stroke-width="1.3"/><path d="M4.76 4.76 L2.99 2.99" stroke="#dcdcdc" stroke-width="1.3"/><path d="M9.00 3.00 L9.00 0.50" stroke="#dcdcdc" stroke-width="1.3"/><path d="M13.24 4.76 L15.01 2.99" stroke="#dcdcdc" stroke-width="1.3"/></svg>
<div class="t" style="left:1444.0px;top:539.14px;font-size:14.6px;color:#dcdcdc;">Sun</div>
<svg style="left:1483px;top:538px;" width="18" height="18" viewBox="0 0 18 18"><path d="M3.5 13.5 C2 8 6 3 17 1.5 C15.5 12 10.5 16 5 14.5 Z" fill="none" stroke="#dcdcdc" stroke-width="1.3"/><path d="M8 10 L1 17" stroke="#dcdcdc" stroke-width="1.2" stroke-dasharray="2 1.5"/><circle cx="11" cy="7" r="1" fill="#dcdcdc"/></svg>
<div class="t" style="left:1505.0px;top:539.14px;font-size:14.6px;color:#dcdcdc;">Spot</div>
<svg style="left:1546px;top:538px;" width="19" height="18" viewBox="0 0 19 18"><path d="M5 2 H11 L17 14 L7 15 Z" fill="none" stroke="#dcdcdc" stroke-width="1.3"/><path d="M5 13 L1 17" stroke="#dcdcdc" stroke-width="1.2" stroke-dasharray="2 1.5"/><circle cx="9" cy="9" r="1" fill="#dcdcdc"/></svg>
<div class="t" style="left:1570.0px;top:539.14px;font-size:14.6px;color:#dcdcdc;">Area</div>
<div class="t" style="right:189.7px;top:570.04px;font-size:14.6px;color:#d8d8d8;">Color</div>
<div class="a" style="left:1449.4px;top:566px;width:131.5px;height:23px;background:#c8fbfd;border-radius:5px;"></div>
<div class="t" style="right:189.7px;top:596.84px;font-size:14.6px;color:#d8d8d8;">Power</div>
<div class="a" style="left:1449.4px;top:593px;width:131.5px;height:23px;background:#545454;border-radius:5px;"></div>
<div class="t" style="left:1215.0px;width:600px;text-align:center;top:596.84px;font-size:14.6px;color:#e0e0e0;letter-spacing:0.24px;">4.5 W</div>
<div class="a" style="left:1591.5px;top:575.0px;width:5px;height:5px;background:#e0e0e0;border-radius:3px;"></div>
<div class="a" style="left:1591.5px;top:602.0px;width:5px;height:5px;background:#e0e0e0;border-radius:3px;"></div>
<div class="a" style="left:1591.5px;top:638.0px;width:5px;height:5px;background:#e0e0e0;border-radius:3px;"></div>
<div class="a" style="left:1591.5px;top:665.0px;width:5px;height:5px;background:#e0e0e0;border-radius:3px;"></div>
<div class="a" style="left:1449.4px;top:632px;width:17px;height:17px;background:#4772b3;border-radius:4px;"></div>
<svg style="left:1451px;top:634px;" width="14" height="13" viewBox="0 0 14 13"><path d="M2.5 6.5 L5.5 10 L11.5 2.5" fill="none" stroke="#fff" stroke-width="2"/></svg>
<div class="t" style="left:1470.5px;top:632.64px;font-size:14.6px;color:#dcdcdc;">Soft Falloff</div>
<div class="t" style="right:189.7px;top:659.24px;font-size:14.6px;color:#d8d8d8;">Radius</div>
<div class="a" style="left:1449.4px;top:656px;width:131.5px;height:23px;background:#545454;border-radius:5px;"></div>
<div class="t" style="left:1215.0px;width:600px;text-align:center;top:659.64px;font-size:14.6px;color:#e0e0e0;letter-spacing:0.20px;">0 m</div>
<svg style="left:1371px;top:701px;" width="6.6" height="11" viewBox="0 0 6.6 11"><path d="M0.5 0.5 L6.1 5.5 L0.5 10.5" fill="none" stroke="#d0d0d0" stroke-width="1.3"/></svg>
<div class="a" style="left:1383.4px;top:698px;width:17px;height:17px;background:#4772b3;border-radius:4px;"></div>
<svg style="left:1385px;top:700px;" width="14" height="13" viewBox="0 0 14 13"><path d="M2.5 6.5 L5.5 10 L11.5 2.5" fill="none" stroke="#fff" stroke-width="2"/></svg>
<div class="t" style="left:1403.5px;top:698.84px;font-size:14.6px;color:#dcdcdc;">Shadow</div>
<svg style="left:1371px;top:731px;" width="6.6" height="11" viewBox="0 0 6.6 11"><path d="M0.5 0.5 L6.1 5.5 L0.5 10.5" fill="none" stroke="#d0d0d0" stroke-width="1.3"/></svg>
<div class="t" style="left:1384.0px;top:729.84px;font-size:14.6px;color:#dcdcdc;">Influence</div>
<div class="a" style="left:1px;top:589px;width:1290px;height:168px;background:#1d1d1d;border-radius:7px 7px 0 0;"></div>
<svg style="left:1px;top:589px;" width="1290" height="168" viewBox="0 0 1290 168"><rect x="16.3" y="50.9" width="2" height="2" fill="#232323"/><rect x="16.3" y="69.1" width="2" height="2" fill="#232323"/><rect x="16.3" y="87.4" width="2" height="2" fill="#232323"/><rect x="16.3" y="105.7" width="2" height="2" fill="#232323"/><rect x="16.3" y="123.9" width="2" height="2" fill="#232323"/><rect x="16.3" y="142.2" width="2" height="2" fill="#232323"/><rect x="16.3" y="160.5" width="2" height="2" fill="#232323"/><rect x="34.6" y="50.9" width="2" height="2" fill="#232323"/><rect x="34.6" y="69.1" width="2" height="2" fill="#232323"/><rect x="34.6" y="87.4" width="2" height="2" fill="#232323"/><rect x="34.6" y="105.7" width="2" height="2" fill="#232323"/><rect x="34.6" y="123.9" width="2" height="2" fill="#232323"/><rect x="34.6" y="142.2" width="2" height="2" fill="#232323"/><rect x="34.6" y="160.5" width="2" height="2" fill="#232323"/><rect x="52.8" y="50.9" width="2" height="2" fill="#232323"/><rect x="52.8" y="69.1" width="2" height="2" fill="#232323"/><rect x="52.8" y="87.4" width="2" height="2" fill="#232323"/><rect x="52.8" y="105.7" width="2" height="2" fill="#232323"/><rect x="52.8" y="123.9" width="2" height="2" fill="#232323"/><rect x="52.8" y="142.2" width="2" height="2" fill="#232323"/><rect x="52.8" y="160.5" width="2" height="2" fill="#232323"/><rect x="71.1" y="50.9" width="2" height="2" fill="#232323"/><rect x="71.1" y="69.1" width="2" height="2" fill="#232323"/><rect x="71.1" y="87.4" width="2" height="2" fill="#2c2c2c"/><rect x="71.1" y="105.7" width="2" height="2" fill="#232323"/><rect x="71.1" y="123.9" width="2" height="2" fill="#232323"/><rect x="71.1" y="142.2" width="2" height="2" fill="#232323"/><rect x="71.1" y="160.5" width="2" height="2" fill="#232323"/><rect x="89.4" y="50.9" width="2" height="2" fill="#232323"/><rect x="89.4" y="69.1" width="2" height="2" fill="#232323"/><rect x="89.4" y="87.4" width="2" height="2" fill="#232323"/><rect x="89.4" y="105.7" width="2" height="2" fill="#232323"/><rect x="89.4" y="123.9" width="2" height="2" fill="#232323"/><rect x="89.4" y="142.2" width="2" height="2" fill="#232323"/><rect x="89.4" y="160.5" width="2" height="2" fill="#232323"/><rect x="107.6" y="50.9" width="2" height="2" fill="#232323"/><rect x="107.6" y="69.1" width="2" height="2" fill="#232323"/><rect x="107.6" y="87.4" width="2" height="2" fill="#232323"/><rect x="107.6" y="105.7" width="2" height="2" fill="#232323"/><rect x="107.6" y="123.9" width="2" height="2" fill="#232323"/><rect x="107.6" y="142.2" width="2" height="2" fill="#232323"/><rect x="107.6" y="160.5" width="2" height="2" fill="#232323"/><rect x="125.9" y="50.9" width="2" height="2" fill="#232323"/><rect x="125.9" y="69.1" width="2" height="2" fill="#232323"/><rect x="125.9" y="87.4" width="2" height="2" fill="#232323"/><rect x="125.9" y="105.7" width="2" height="2" fill="#232323"/><rect x="125.9" y="123.9" width="2" height="2" fill="#232323"/><rect x="125.9" y="142.2" width="2" height="2" fill="#232323"/><rect x="125.9" y="160.5" width="2" height="2" fill="#232323"/><rect x="144.2" y="50.9" width="2" height="2" fill="#232323"/><rect x="144.2" y="69.1" width="2" height="2" fill="#232323"/><rect x="144.2" y="87.4" width="2" height="2" fill="#232323"/><rect x="144.2" y="105.7" width="2" height="2" fill="#232323"/><rect x="144.2" y="123.9" width="2" height="2" fill="#232323"/><rect x="144.2" y="142.2" width="2" height="2" fill="#232323"/><rect x="144.2" y="160.5" width="2" height="2" fill="#232323"/><rect x="162.4" y="50.9" width="2" height="2" fill="#232323"/><rect x="162.4" y="69.1" width="2" height="2" fill="#232323"/><rect x="162.4" y="87.4" width="2" height="2" fill="#2c2c2c"/><rect x="162.4" y="105.7" width="2" height="2" fill="#232323"/><rect x="162.4" y="123.9" width="2" height="2" fill="#232323"/><rect x="162.4" y="142.2" width="2" height="2" fill="#232323"/><rect x="162.4" y="160.5" width="2" height="2" fill="#232323"/><rect x="180.7" y="50.9" width="2" height="2" fill="#232323"/><rect x="180.7" y="69.1" width="2" height="2" fill="#232323"/><rect x="180.7" y="87.4" width="2" height="2" fill="#232323"/><rect x="180.7" y="105.7" width="2" height="2" fill="#232323"/><rect x="180.7" y="123.9" width="2" height="2" fill="#232323"/><rect x="180.7" y="142.2" width="2" height="2" fill="#232323"/><rect x="180.7" y="160.5" width="2" height="2" fill="#232323"/><rect x="199.0" y="50.9" width="2" height="2" fill="#232323"/><rect x="199.0" y="69.1" width="2" height="2" fill="#232323"/><rect x="199.0" y="87.4" width="2" height="2" fill="#232323"/><rect x="199.0" y="105.7" width="2" height="2" fill="#232323"/><rect x="199.0" y="123.9" width="2" height="2" fill="#232323"/><rect x="199.0" y="142.2" width="2" height="2" fill="#232323"/><rect x="199.0" y="160.5" width="2" height="2" fill="#232323"/><rect x="217.3" y="50.9" width="2" height="2" fill="#232323"/><rect x="217.3" y="69.1" width="2" height="2" fill="#232323"/><rect x="217.3" y="87.4" width="2" height="2" fill="#232323"/><rect x="217.3" y="105.7" width="2" height="2" fill="#232323"/><rect x="217.3" y="123.9" width="2" height="2" fill="#232323"/><rect x="217.3" y="142.2" width="2" height="2" fill="#232323"/><rect x="217.3" y="160.5" width="2" height="2" fill="#232323"/><rect x="235.5" y="50.9" width="2" height="2" fill="#232323"/><rect x="235.5" y="69.1" width="2" height="2" fill="#232323"/><rect x="235.5" y="87.4" width="2" height="2" fill="#232323"/><rect x="235.5" y="105.7" width="2" height="2" fill="#232323"/><rect x="235.5" y="123.9" width="2" height="2" fill="#232323"/><rect x="235.5" y="142.2" width="2" height="2" fill="#232323"/><rect x="235.5" y="160.5" width="2" height="2" fill="#232323"/><rect x="253.8" y="50.9" width="2" height="2" fill="#232323"/><rect x="253.8" y="69.1" width="2" height="2" fill="#232323"/><rect x="253.8" y="87.4" width="2" height="2" fill="#2c2c2c"/><rect x="253.8" y="105.7" width="2" height="2" fill="#232323"/><rect x="253.8" y="123.9" width="2" height="2" fill="#232323"/><rect x="253.8" y="142.2" width="2" height="2" fill="#232323"/><rect x="253.8" y="160.5" width="2" height="2" fill="#232323"/><rect x="272.1" y="50.9" width="2" height="2" fill="#232323"/><rect x="272.1" y="69.1" width="2" height="2" fill="#232323"/><rect x="272.1" y="87.4" width="2" height="2" fill="#232323"/><rect x="272.1" y="105.7" width="2" height="2" fill="#232323"/><rect x="272.1" y="123.9" width="2" height="2" fill="#232323"/><rect x="272.1" y="142.2" width="2" height="2" fill="#232323"/><rect x="272.1" y="160.5" width="2" height="2" fill="#232323"/><rect x="290.3" y="50.9" width="2" height="2" fill="#232323"/><rect x="290.3" y="69.1" width="2" height="2" fill="#232323"/><rect x="290.3" y="87.4" width="2" height="2" fill="#232323"/><rect x="290.3" y="105.7" width="2" height="2" fill="#232323"/><rect x="290.3" y="123.9" width="2" height="2" fill="#232323"/><rect x="290.3" y="142.2" width="2" height="2" fill="#232323"/><rect x="290.3" y="160.5" width="2" height="2" fill="#232323"/><rect x="308.6" y="50.9" width="2" height="2" fill="#232323"/><rect x="308.6" y="69.1" width="2" height="2" fill="#232323"/><rect x="308.6" y="87.4" width="2" height="2" fill="#232323"/><rect x="308.6" y="105.7" width="2" height="2" fill="#232323"/><rect x="308.6" y="123.9" width="2" height="2" fill="#232323"/><rect x="308.6" y="142.2" width="2" height="2" fill="#232323"/><rect x="308.6" y="160.5" width="2" height="2" fill="#232323"/><rect x="326.9" y="50.9" width="2" height="2" fill="#232323"/><rect x="326.9" y="69.1" width="2" height="2" fill="#232323"/><rect x="326.9" y="87.4" width="2" height="2" fill="#232323"/><rect x="326.9" y="105.7" width="2" height="2" fill="#232323"/><rect x="326.9" y="123.9" width="2" height="2" fill="#232323"/><rect x="326.9" y="142.2" width="2" height="2" fill="#232323"/><rect x="326.9" y="160.5" width="2" height="2" fill="#232323"/><rect x="345.1" y="50.9" width="2" height="2" fill="#232323"/><rect x="345.1" y="69.1" width="2" height="2" fill="#232323"/><rect x="345.1" y="87.4" width="2" height="2" fill="#2c2c2c"/><rect x="345.1" y="105.7" width="2" height="2" fill="#232323"/><rect x="345.1" y="123.9" width="2" height="2" fill="#232323"/><rect x="345.1" y="142.2" width="2" height="2" fill="#232323"/><rect x="345.1" y="160.5" width="2" height="2" fill="#232323"/><rect x="363.4" y="50.9" width="2" height="2" fill="#232323"/><rect x="363.4" y="69.1" width="2" height="2" fill="#232323"/><rect x="363.4" y="87.4" width="2" height="2" fill="#232323"/><rect x="363.4" y="105.7" width="2" height="2" fill="#232323"/><rect x="363.4" y="123.9" width="2" height="2" fill="#232323"/><rect x="363.4" y="142.2" width="2" height="2" fill="#232323"/><rect x="363.4" y="160.5" width="2" height="2" fill="#232323"/><rect x="381.7" y="50.9" width="2" height="2" fill="#232323"/><rect x="381.7" y="69.1" width="2" height="2" fill="#232323"/><rect x="381.7" y="87.4" width="2" height="2" fill="#232323"/><rect x="381.7" y="105.7" width="2" height="2" fill="#232323"/><rect x="381.7" y="123.9" width="2" height="2" fill="#232323"/><rect x="381.7" y="142.2" width="2" height="2" fill="#232323"/><rect x="381.7" y="160.5" width="2" height="2" fill="#232323"/><rect x="400.0" y="50.9" width="2" height="2" fill="#232323"/><rect x="400.0" y="69.1" width="2" height="2" fill="#232323"/><rect x="400.0" y="87.4" width="2" height="2" fill="#232323"/><rect x="400.0" y="105.7" width="2" height="2" fill="#232323"/><rect x="400.0" y="123.9" width="2" height="2" fill="#232323"/><rect x="400.0" y="142.2" width="2" height="2" fill="#232323"/><rect x="400.0" y="160.5" width="2" height="2" fill="#232323"/><rect x="418.2" y="50.9" width="2" height="2" fill="#232323"/><rect x="418.2" y="69.1" width="2" height="2" fill="#232323"/><rect x="418.2" y="87.4" width="2" height="2" fill="#232323"/><rect x="418.2" y="105.7" width="2" height="2" fill="#232323"/><rect x="418.2" y="123.9" width="2" height="2" fill="#232323"/><rect x="418.2" y="142.2" width="2" height="2" fill="#232323"/><rect x="418.2" y="160.5" width="2" height="2" fill="#232323"/><rect x="436.5" y="50.9" width="2" height="2" fill="#232323"/><rect x="436.5" y="69.1" width="2" height="2" fill="#232323"/><rect x="436.5" y="87.4" width="2" height="2" fill="#2c2c2c"/><rect x="436.5" y="105.7" width="2" height="2" fill="#232323"/><rect x="436.5" y="123.9" width="2" height="2" fill="#232323"/><rect x="436.5" y="142.2" width="2" height="2" fill="#232323"/><rect x="436.5" y="160.5" width="2" height="2" fill="#232323"/><rect x="454.8" y="50.9" width="2" height="2" fill="#232323"/><rect x="454.8" y="69.1" width="2" height="2" fill="#232323"/><rect x="454.8" y="87.4" width="2" height="2" fill="#232323"/><rect x="454.8" y="105.7" width="2" height="2" fill="#232323"/><rect x="454.8" y="123.9" width="2" height="2" fill="#232323"/><rect x="454.8" y="142.2" width="2" height="2" fill="#232323"/><rect x="454.8" y="160.5" width="2" height="2" fill="#232323"/><rect x="473.0" y="50.9" width="2" height="2" fill="#232323"/><rect x="473.0" y="69.1" width="2" height="2" fill="#232323"/><rect x="473.0" y="87.4" width="2" height="2" fill="#232323"/><rect x="473.0" y="105.7" width="2" height="2" fill="#232323"/><rect x="473.0" y="123.9" width="2" height="2" fill="#232323"/><rect x="473.0" y="142.2" width="2" height="2" fill="#232323"/><rect x="473.0" y="160.5" width="2" height="2" fill="#232323"/><rect x="491.3" y="50.9" width="2" height="2" fill="#232323"/><rect x="491.3" y="69.1" width="2" height="2" fill="#232323"/><rect x="491.3" y="87.4" width="2" height="2" fill="#232323"/><rect x="491.3" y="105.7" width="2" height="2" fill="#232323"/><rect x="491.3" y="123.9" width="2" height="2" fill="#232323"/><rect x="491.3" y="142.2" width="2" height="2" fill="#232323"/><rect x="491.3" y="160.5" width="2" height="2" fill="#232323"/><rect x="509.6" y="50.9" width="2" height="2" fill="#232323"/><rect x="509.6" y="69.1" width="2" height="2" fill="#232323"/><rect x="509.6" y="87.4" width="2" height="2" fill="#232323"/><rect x="509.6" y="105.7" width="2" height="2" fill="#232323"/><rect x="509.6" y="123.9" width="2" height="2" fill="#232323"/><rect x="509.6" y="142.2" width="2" height="2" fill="#232323"/><rect x="509.6" y="160.5" width="2" height="2" fill="#232323"/><rect x="527.9" y="50.9" width="2" height="2" fill="#232323"/><rect x="527.9" y="69.1" width="2" height="2" fill="#232323"/><rect x="527.9" y="87.4" width="2" height="2" fill="#2c2c2c"/><rect x="527.9" y="105.7" width="2" height="2" fill="#232323"/><rect x="527.9" y="123.9" width="2" height="2" fill="#232323"/><rect x="527.9" y="142.2" width="2" height="2" fill="#232323"/><rect x="527.9" y="160.5" width="2" height="2" fill="#232323"/><rect x="546.1" y="50.9" width="2" height="2" fill="#232323"/><rect x="546.1" y="69.1" width="2" height="2" fill="#232323"/><rect x="546.1" y="87.4" width="2" height="2" fill="#232323"/><rect x="546.1" y="105.7" width="2" height="2" fill="#232323"/><rect x="546.1" y="123.9" width="2" height="2" fill="#232323"/><rect x="546.1" y="142.2" width="2" height="2" fill="#232323"/><rect x="546.1" y="160.5" width="2" height="2" fill="#232323"/><rect x="564.4" y="50.9" width="2" height="2" fill="#232323"/><rect x="564.4" y="69.1" width="2" height="2" fill="#232323"/><rect x="564.4" y="87.4" width="2" height="2" fill="#232323"/><rect x="564.4" y="105.7" width="2" height="2" fill="#232323"/><rect x="564.4" y="123.9" width="2" height="2" fill="#232323"/><rect x="564.4" y="142.2" width="2" height="2" fill="#232323"/><rect x="564.4" y="160.5" width="2" height="2" fill="#232323"/><rect x="582.7" y="50.9" width="2" height="2" fill="#232323"/><rect x="582.7" y="69.1" width="2" height="2" fill="#232323"/><rect x="582.7" y="87.4" width="2" height="2" fill="#232323"/><rect x="582.7" y="105.7" width="2" height="2" fill="#232323"/><rect x="582.7" y="123.9" width="2" height="2" fill="#232323"/><rect x="582.7" y="142.2" width="2" height="2" fill="#232323"/><rect x="582.7" y="160.5" width="2" height="2" fill="#232323"/><rect x="600.9" y="50.9" width="2" height="2" fill="#232323"/><rect x="600.9" y="69.1" width="2" height="2" fill="#232323"/><rect x="600.9" y="87.4" width="2" height="2" fill="#232323"/><rect x="600.9" y="105.7" width="2" height="2" fill="#232323"/><rect x="600.9" y="123.9" width="2" height="2" fill="#232323"/><rect x="600.9" y="142.2" width="2" height="2" fill="#232323"/><rect x="600.9" y="160.5" width="2" height="2" fill="#232323"/><rect x="619.2" y="50.9" width="2" height="2" fill="#232323"/><rect x="619.2" y="69.1" width="2" height="2" fill="#232323"/><rect x="619.2" y="87.4" width="2" height="2" fill="#2c2c2c"/><rect x="619.2" y="105.7" width="2" height="2" fill="#232323"/><rect x="619.2" y="123.9" width="2" height="2" fill="#232323"/><rect x="619.2" y="142.2" width="2" height="2" fill="#232323"/><rect x="619.2" y="160.5" width="2" height="2" fill="#232323"/><rect x="637.5" y="50.9" width="2" height="2" fill="#232323"/><rect x="637.5" y="69.1" width="2" height="2" fill="#232323"/><rect x="637.5" y="87.4" width="2" height="2" fill="#232323"/><rect x="637.5" y="105.7" width="2" height="2" fill="#232323"/><rect x="637.5" y="123.9" width="2" height="2" fill="#232323"/><rect x="637.5" y="142.2" width="2" height="2" fill="#232323"/><rect x="637.5" y="160.5" width="2" height="2" fill="#232323"/><rect x="655.7" y="50.9" width="2" height="2" fill="#232323"/><rect x="655.7" y="69.1" width="2" height="2" fill="#232323"/><rect x="655.7" y="87.4" width="2" height="2" fill="#232323"/><rect x="655.7" y="105.7" width="2" height="2" fill="#232323"/><rect x="655.7" y="123.9" width="2" height="2" fill="#232323"/><rect x="655.7" y="142.2" width="2" height="2" fill="#232323"/><rect x="655.7" y="160.5" width="2" height="2" fill="#232323"/><rect x="674.0" y="50.9" width="2" height="2" fill="#232323"/><rect x="674.0" y="69.1" width="2" height="2" fill="#232323"/><rect x="674.0" y="87.4" width="2" height="2" fill="#232323"/><rect x="674.0" y="105.7" width="2" height="2" fill="#232323"/><rect x="674.0" y="123.9" width="2" height="2" fill="#232323"/><rect x="674.0" y="142.2" width="2" height="2" fill="#232323"/><rect x="674.0" y="160.5" width="2" height="2" fill="#232323"/><rect x="692.3" y="50.9" width="2" height="2" fill="#232323"/><rect x="692.3" y="69.1" width="2" height="2" fill="#232323"/><rect x="692.3" y="87.4" width="2" height="2" fill="#232323"/><rect x="692.3" y="105.7" width="2" height="2" fill="#232323"/><rect x="692.3" y="123.9" width="2" height="2" fill="#232323"/><rect x="692.3" y="142.2" width="2" height="2" fill="#232323"/><rect x="692.3" y="160.5" width="2" height="2" fill="#232323"/><rect x="710.5" y="50.9" width="2" height="2" fill="#232323"/><rect x="710.5" y="69.1" width="2" height="2" fill="#232323"/><rect x="710.5" y="87.4" width="2" height="2" fill="#2c2c2c"/><rect x="710.5" y="105.7" width="2" height="2" fill="#232323"/><rect x="710.5" y="123.9" width="2" height="2" fill="#232323"/><rect x="710.5" y="142.2" width="2" height="2" fill="#232323"/><rect x="710.5" y="160.5" width="2" height="2" fill="#232323"/><rect x="728.8" y="50.9" width="2" height="2" fill="#232323"/><rect x="728.8" y="69.1" width="2" height="2" fill="#232323"/><rect x="728.8" y="87.4" width="2" height="2" fill="#232323"/><rect x="728.8" y="105.7" width="2" height="2" fill="#232323"/><rect x="728.8" y="123.9" width="2" height="2" fill="#232323"/><rect x="728.8" y="142.2" width="2" height="2" fill="#232323"/><rect x="728.8" y="160.5" width="2" height="2" fill="#232323"/><rect x="747.1" y="50.9" width="2" height="2" fill="#232323"/><rect x="747.1" y="69.1" width="2" height="2" fill="#232323"/><rect x="747.1" y="87.4" width="2" height="2" fill="#232323"/><rect x="747.1" y="105.7" width="2" height="2" fill="#232323"/><rect x="747.1" y="123.9" width="2" height="2" fill="#232323"/><rect x="747.1" y="142.2" width="2" height="2" fill="#232323"/><rect x="747.1" y="160.5" width="2" height="2" fill="#232323"/><rect x="765.4" y="50.9" width="2" height="2" fill="#232323"/><rect x="765.4" y="69.1" width="2" height="2" fill="#232323"/><rect x="765.4" y="87.4" width="2" height="2" fill="#232323"/><rect x="765.4" y="105.7" width="2" height="2" fill="#232323"/><rect x="765.4" y="123.9" width="2" height="2" fill="#232323"/><rect x="765.4" y="142.2" width="2" height="2" fill="#232323"/><rect x="765.4" y="160.5" width="2" height="2" fill="#232323"/><rect x="783.6" y="50.9" width="2" height="2" fill="#232323"/><rect x="783.6" y="69.1" width="2" height="2" fill="#232323"/><rect x="783.6" y="87.4" width="2" height="2" fill="#232323"/><rect x="783.6" y="105.7" width="2" height="2" fill="#232323"/><rect x="783.6" y="123.9" width="2" height="2" fill="#232323"/><rect x="783.6" y="142.2" width="2" height="2" fill="#232323"/><rect x="783.6" y="160.5" width="2" height="2" fill="#232323"/><rect x="801.9" y="50.9" width="2" height="2" fill="#232323"/><rect x="801.9" y="69.1" width="2" height="2" fill="#232323"/><rect x="801.9" y="87.4" width="2" height="2" fill="#2c2c2c"/><rect x="801.9" y="105.7" width="2" height="2" fill="#232323"/><rect x="801.9" y="123.9" width="2" height="2" fill="#232323"/><rect x="801.9" y="142.2" width="2" height="2" fill="#232323"/><rect x="801.9" y="160.5" width="2" height="2" fill="#232323"/><rect x="820.2" y="50.9" width="2" height="2" fill="#232323"/><rect x="820.2" y="69.1" width="2" height="2" fill="#232323"/><rect x="820.2" y="87.4" width="2" height="2" fill="#232323"/><rect x="820.2" y="105.7" width="2" height="2" fill="#232323"/><rect x="820.2" y="123.9" width="2" height="2" fill="#232323"/><rect x="820.2" y="142.2" width="2" height="2" fill="#232323"/><rect x="820.2" y="160.5" width="2" height="2" fill="#232323"/><rect x="838.4" y="50.9" width="2" height="2" fill="#232323"/><rect x="838.4" y="69.1" width="2" height="2" fill="#232323"/><rect x="838.4" y="87.4" width="2" height="2" fill="#232323"/><rect x="838.4" y="105.7" width="2" height="2" fill="#232323"/><rect x="838.4" y="123.9" width="2" height="2" fill="#232323"/><rect x="838.4" y="142.2" width="2" height="2" fill="#232323"/><rect x="838.4" y="160.5" width="2" height="2" fill="#232323"/><rect x="856.7" y="50.9" width="2" height="2" fill="#232323"/><rect x="856.7" y="69.1" width="2" height="2" fill="#232323"/><rect x="856.7" y="87.4" width="2" height="2" fill="#232323"/><rect x="856.7" y="105.7" width="2" height="2" fill="#232323"/><rect x="856.7" y="123.9" width="2" height="2" fill="#232323"/><rect x="856.7" y="142.2" width="2" height="2" fill="#232323"/><rect x="856.7" y="160.5" width="2" height="2" fill="#232323"/><rect x="875.0" y="50.9" width="2" height="2" fill="#232323"/><rect x="875.0" y="69.1" width="2" height="2" fill="#232323"/><rect x="875.0" y="87.4" width="2" height="2" fill="#232323"/><rect x="875.0" y="105.7" width="2" height="2" fill="#232323"/><rect x="875.0" y="123.9" width="2" height="2" fill="#232323"/><rect x="875.0" y="142.2" width="2" height="2" fill="#232323"/><rect x="875.0" y="160.5" width="2" height="2" fill="#232323"/><rect x="893.2" y="50.9" width="2" height="2" fill="#232323"/><rect x="893.2" y="69.1" width="2" height="2" fill="#232323"/><rect x="893.2" y="87.4" width="2" height="2" fill="#2c2c2c"/><rect x="893.2" y="105.7" width="2" height="2" fill="#232323"/><rect x="893.2" y="123.9" width="2" height="2" fill="#232323"/><rect x="893.2" y="142.2" width="2" height="2" fill="#232323"/><rect x="893.2" y="160.5" width="2" height="2" fill="#232323"/><rect x="911.5" y="50.9" width="2" height="2" fill="#232323"/><rect x="911.5" y="69.1" width="2" height="2" fill="#232323"/><rect x="911.5" y="87.4" width="2" height="2" fill="#232323"/><rect x="911.5" y="105.7" width="2" height="2" fill="#232323"/><rect x="911.5" y="123.9" width="2" height="2" fill="#232323"/><rect x="911.5" y="142.2" width="2" height="2" fill="#232323"/><rect x="911.5" y="160.5" width="2" height="2" fill="#232323"/><rect x="929.8" y="50.9" width="2" height="2" fill="#232323"/><rect x="929.8" y="69.1" width="2" height="2" fill="#232323"/><rect x="929.8" y="87.4" width="2" height="2" fill="#232323"/><rect x="929.8" y="105.7" width="2" height="2" fill="#232323"/><rect x="929.8" y="123.9" width="2" height="2" fill="#232323"/><rect x="929.8" y="142.2" width="2" height="2" fill="#232323"/><rect x="929.8" y="160.5" width="2" height="2" fill="#232323"/><rect x="948.1" y="50.9" width="2" height="2" fill="#232323"/><rect x="948.1" y="69.1" width="2" height="2" fill="#232323"/><rect x="948.1" y="87.4" width="2" height="2" fill="#232323"/><rect x="948.1" y="105.7" width="2" height="2" fill="#232323"/><rect x="948.1" y="123.9" width="2" height="2" fill="#232323"/><rect x="948.1" y="142.2" width="2" height="2" fill="#232323"/><rect x="948.1" y="160.5" width="2" height="2" fill="#232323"/><rect x="966.3" y="50.9" width="2" height="2" fill="#232323"/><rect x="966.3" y="69.1" width="2" height="2" fill="#232323"/><rect x="966.3" y="87.4" width="2" height="2" fill="#232323"/><rect x="966.3" y="105.7" width="2" height="2" fill="#232323"/><rect x="966.3" y="123.9" width="2" height="2" fill="#232323"/><rect x="966.3" y="142.2" width="2" height="2" fill="#232323"/><rect x="966.3" y="160.5" width="2" height="2" fill="#232323"/><rect x="984.6" y="50.9" width="2" height="2" fill="#232323"/><rect x="984.6" y="69.1" width="2" height="2" fill="#232323"/><rect x="984.6" y="87.4" width="2" height="2" fill="#2c2c2c"/><rect x="984.6" y="105.7" width="2" height="2" fill="#232323"/><rect x="984.6" y="123.9" width="2" height="2" fill="#232323"/><rect x="984.6" y="142.2" width="2" height="2" fill="#232323"/><rect x="984.6" y="160.5" width="2" height="2" fill="#232323"/><rect x="1002.9" y="50.9" width="2" height="2" fill="#232323"/><rect x="1002.9" y="69.1" width="2" height="2" fill="#232323"/><rect x="1002.9" y="87.4" width="2" height="2" fill="#232323"/><rect x="1002.9" y="105.7" width="2" height="2" fill="#232323"/><rect x="1002.9" y="123.9" width="2" height="2" fill="#232323"/><rect x="1002.9" y="142.2" width="2" height="2" fill="#232323"/><rect x="1002.9" y="160.5" width="2" height="2" fill="#232323"/><rect x="1021.1" y="50.9" width="2" height="2" fill="#232323"/><rect x="1021.1" y="69.1" width="2" height="2" fill="#232323"/><rect x="1021.1" y="87.4" width="2" height="2" fill="#232323"/><rect x="1021.1" y="105.7" width="2" height="2" fill="#232323"/><rect x="1021.1" y="123.9" width="2" height="2" fill="#232323"/><rect x="1021.1" y="142.2" width="2" height="2" fill="#232323"/><rect x="1021.1" y="160.5" width="2" height="2" fill="#232323"/><rect x="1039.4" y="50.9" width="2" height="2" fill="#232323"/><rect x="1039.4" y="69.1" width="2" height="2" fill="#232323"/><rect x="1039.4" y="87.4" width="2" height="2" fill="#232323"/><rect x="1039.4" y="105.7" width="2" height="2" fill="#232323"/><rect x="1039.4" y="123.9" width="2" height="2" fill="#232323"/><rect x="1039.4" y="142.2" width="2" height="2" fill="#232323"/><rect x="1039.4" y="160.5" width="2" height="2" fill="#232323"/><rect x="1057.7" y="50.9" width="2" height="2" fill="#232323"/><rect x="1057.7" y="69.1" width="2" height="2" fill="#232323"/><rect x="1057.7" y="87.4" width="2" height="2" fill="#232323"/><rect x="1057.7" y="105.7" width="2" height="2" fill="#232323"/><rect x="1057.7" y="123.9" width="2" height="2" fill="#232323"/><rect x="1057.7" y="142.2" width="2" height="2" fill="#232323"/><rect x="1057.7" y="160.5" width="2" height="2" fill="#232323"/><rect x="1076.0" y="50.9" width="2" height="2" fill="#232323"/><rect x="1076.0" y="69.1" width="2" height="2" fill="#232323"/><rect x="1076.0" y="87.4" width="2" height="2" fill="#2c2c2c"/><rect x="1076.0" y="105.7" width="2" height="2" fill="#232323"/><rect x="1076.0" y="123.9" width="2" height="2" fill="#232323"/><rect x="1076.0" y="142.2" width="2" height="2" fill="#232323"/><rect x="1076.0" y="160.5" width="2" height="2" fill="#232323"/><rect x="1094.2" y="50.9" width="2" height="2" fill="#232323"/><rect x="1094.2" y="69.1" width="2" height="2" fill="#232323"/><rect x="1094.2" y="87.4" width="2" height="2" fill="#232323"/><rect x="1094.2" y="105.7" width="2" height="2" fill="#232323"/><rect x="1094.2" y="123.9" width="2" height="2" fill="#232323"/><rect x="1094.2" y="142.2" width="2" height="2" fill="#232323"/><rect x="1094.2" y="160.5" width="2" height="2" fill="#232323"/><rect x="1112.5" y="50.9" width="2" height="2" fill="#232323"/><rect x="1112.5" y="69.1" width="2" height="2" fill="#232323"/><rect x="1112.5" y="87.4" width="2" height="2" fill="#232323"/><rect x="1112.5" y="105.7" width="2" height="2" fill="#232323"/><rect x="1112.5" y="123.9" width="2" height="2" fill="#232323"/><rect x="1112.5" y="142.2" width="2" height="2" fill="#232323"/><rect x="1112.5" y="160.5" width="2" height="2" fill="#232323"/><rect x="1130.8" y="50.9" width="2" height="2" fill="#232323"/><rect x="1130.8" y="69.1" width="2" height="2" fill="#232323"/><rect x="1130.8" y="87.4" width="2" height="2" fill="#232323"/><rect x="1130.8" y="105.7" width="2" height="2" fill="#232323"/><rect x="1130.8" y="123.9" width="2" height="2" fill="#232323"/><rect x="1130.8" y="142.2" width="2" height="2" fill="#232323"/><rect x="1130.8" y="160.5" width="2" height="2" fill="#232323"/><rect x="1149.0" y="50.9" width="2" height="2" fill="#232323"/><rect x="1149.0" y="69.1" width="2" height="2" fill="#232323"/><rect x="1149.0" y="87.4" width="2" height="2" fill="#232323"/><rect x="1149.0" y="105.7" width="2" height="2" fill="#232323"/><rect x="1149.0" y="123.9" width="2" height="2" fill="#232323"/><rect x="1149.0" y="142.2" width="2" height="2" fill="#232323"/><rect x="1149.0" y="160.5" width="2" height="2" fill="#232323"/><rect x="1167.3" y="50.9" width="2" height="2" fill="#232323"/><rect x="1167.3" y="69.1" width="2" height="2" fill="#232323"/><rect x="1167.3" y="87.4" width="2" height="2" fill="#2c2c2c"/><rect x="1167.3" y="105.7" width="2" height="2" fill="#232323"/><rect x="1167.3" y="123.9" width="2" height="2" fill="#232323"/><rect x="1167.3" y="142.2" width="2" height="2" fill="#232323"/><rect x="1167.3" y="160.5" width="2" height="2" fill="#232323"/><rect x="1185.6" y="50.9" width="2" height="2" fill="#232323"/><rect x="1185.6" y="69.1" width="2" height="2" fill="#232323"/><rect x="1185.6" y="87.4" width="2" height="2" fill="#232323"/><rect x="1185.6" y="105.7" width="2" height="2" fill="#232323"/><rect x="1185.6" y="123.9" width="2" height="2" fill="#232323"/><rect x="1185.6" y="142.2" width="2" height="2" fill="#232323"/><rect x="1185.6" y="160.5" width="2" height="2" fill="#232323"/><rect x="1203.8" y="50.9" width="2" height="2" fill="#232323"/><rect x="1203.8" y="69.1" width="2" height="2" fill="#232323"/><rect x="1203.8" y="87.4" width="2" height="2" fill="#232323"/><rect x="1203.8" y="105.7" width="2" height="2" fill="#232323"/><rect x="1203.8" y="123.9" width="2" height="2" fill="#232323"/><rect x="1203.8" y="142.2" width="2" height="2" fill="#232323"/><rect x="1203.8" y="160.5" width="2" height="2" fill="#232323"/><rect x="1222.1" y="50.9" width="2" height="2" fill="#232323"/><rect x="1222.1" y="69.1" width="2" height="2" fill="#232323"/><rect x="1222.1" y="87.4" width="2" height="2" fill="#232323"/><rect x="1222.1" y="105.7" width="2" height="2" fill="#232323"/><rect x="1222.1" y="123.9" width="2" height="2" fill="#232323"/><rect x="1222.1" y="142.2" width="2" height="2" fill="#232323"/><rect x="1222.1" y="160.5" width="2" height="2" fill="#232323"/><rect x="1240.4" y="50.9" width="2" height="2" fill="#232323"/><rect x="1240.4" y="69.1" width="2" height="2" fill="#232323"/><rect x="1240.4" y="87.4" width="2" height="2" fill="#232323"/><rect x="1240.4" y="105.7" width="2" height="2" fill="#232323"/><rect x="1240.4" y="123.9" width="2" height="2" fill="#232323"/><rect x="1240.4" y="142.2" width="2" height="2" fill="#232323"/><rect x="1240.4" y="160.5" width="2" height="2" fill="#232323"/><rect x="1258.6" y="50.9" width="2" height="2" fill="#232323"/><rect x="1258.6" y="69.1" width="2" height="2" fill="#232323"/><rect x="1258.6" y="87.4" width="2" height="2" fill="#2c2c2c"/><rect x="1258.6" y="105.7" width="2" height="2" fill="#232323"/><rect x="1258.6" y="123.9" width="2" height="2" fill="#232323"/><rect x="1258.6" y="142.2" width="2" height="2" fill="#232323"/><rect x="1258.6" y="160.5" width="2" height="2" fill="#232323"/><rect x="1276.9" y="50.9" width="2" height="2" fill="#232323"/><rect x="1276.9" y="69.1" width="2" height="2" fill="#232323"/><rect x="1276.9" y="87.4" width="2" height="2" fill="#232323"/><rect x="1276.9" y="105.7" width="2" height="2" fill="#232323"/><rect x="1276.9" y="123.9" width="2" height="2" fill="#232323"/><rect x="1276.9" y="142.2" width="2" height="2" fill="#232323"/><rect x="1276.9" y="160.5" width="2" height="2" fill="#232323"/></svg>
<div class="a" style="left:10px;top:593px;width:40px;height:25px;background:#232323;border-radius:5px;border:1px solid #363636;"></div>
<svg style="left:16px;top:597px;" width="18" height="18" viewBox="0 0 18 18"><circle cx="9" cy="9" r="7.6" fill="none" stroke="#dcdcdc" stroke-width="1.5"/><path d="M5.5 8 A4 4 0 0 1 8 5" fill="none" stroke="#dcdcdc" stroke-width="1.5"/></svg>
<svg style="left:38px;top:604px;" width="7" height="4.2" viewBox="0 0 7 4.2"><path d="M0.5 0.5 L3.5 3.7 L6.5 0.5" fill="none" stroke="#cfcfcf" stroke-width="1.3"/></svg>
<div class="a" style="left:56px;top:593px;width:114.5px;height:25px;background:#232323;border-radius:5px;border:1px solid #363636;"></div>
<svg style="left:61px;top:596px;" width="19" height="19" viewBox="0 0 19 19"><circle cx="9.5" cy="9.5" r="7.6" fill="none" stroke="#dcdcdc" stroke-width="1.4"/><path d="M4 5.5 C6 3 9 2.8 11.5 3.6 L10.8 6 L8.2 8 L8.8 10.2 L6.3 11 L3.2 8.5Z M9 11 L12.5 11.3 L13.5 13.5 L11.3 16.6 L9.8 15.8 L9.8 13Z" fill="#dcdcdc"/><path d="M0.3 18.7 L3.8 15.2 M15.2 3.8 L18.7 0.3" stroke="#dcdcdc" stroke-width="1.4"/></svg>
<div class="t" style="left:88.3px;top:598.34px;font-size:14.6px;color:#dcdcdc;">World</div>
<svg style="left:158px;top:605px;" width="7" height="4.2" viewBox="0 0 7 4.2"><path d="M0.5 0.5 L3.5 3.7 L6.5 0.5" fill="none" stroke="#cfcfcf" stroke-width="1.3"/></svg>
<div class="t" style="left:186.0px;top:598.34px;font-size:14.6px;color:#dcdcdc;">View</div>
<div class="t" style="left:236.0px;top:598.34px;font-size:14.6px;color:#dcdcdc;">Select</div>
<div class="t" style="left:297.0px;top:598.34px;font-size:14.6px;color:#dcdcdc;">Add</div>
<div class="t" style="left:341.0px;top:598.34px;font-size:14.6px;color:#dcdcdc;">Node</div>
<div class="a" style="left:391.5px;top:596.5px;width:17.5px;height:17.5px;background:#4772b3;border-radius:4px;"></div>
<svg style="left:393px;top:598px;" width="14" height="14" viewBox="0 0 14 14"><path d="M2.5 7 L5.8 10.5 L11.5 3" fill="none" stroke="#fff" stroke-width="2"/></svg>
<div class="t" style="left:413.0px;top:598.34px;font-size:14.6px;color:#dcdcdc;">Use Nodes</div>
<div class="a" style="left:523px;top:593.5px;width:214px;height:23.5px;background:#232323;border-radius:5px;border:1px solid #363636;"></div>
<div class="a" style="left:562px;top:594.5px;width:100px;height:21.5px;background:#1d1d1d;"></div>
<div class="a" style="left:662px;top:594.5px;width:74.5px;height:21.5px;background:#545454;border-radius:0 5px 5px 0;"></div>
<div class="a" style="left:687px;top:594.5px;width:1px;height:21.5px;background:#474747;"></div>
<div class="a" style="left:712px;top:594.5px;width:1px;height:21.5px;background:#474747;"></div>
<svg style="left:528px;top:596px;" width="19" height="19" viewBox="0 0 19 19"><circle cx="9.5" cy="9.5" r="7.6" fill="none" stroke="#dcdcdc" stroke-width="1.4"/><path d="M4 5.5 C6 3 9 2.8 11.5 3.6 L10.8 6 L8.2 8 L8.8 10.2 L6.3 11 L3.2 8.5Z M9 11 L12.5 11.3 L13.5 13.5 L11.3 16.6 L9.8 15.8 L9.8 13Z" fill="#dcdcdc"/><path d="M0.3 18.7 L3.8 15.2 M15.2 3.8 L18.7 0.3" stroke="#dcdcdc" stroke-width="1.4"/></svg>
<svg style="left:550px;top:604px;" width="7" height="4.2" viewBox="0 0 7 4.2"><path d="M0.5 0.5 L3.5 3.7 L6.5 0.5" fill="none" stroke="#cfcfcf" stroke-width="1.3"/></svg>
<div class="t" style="left:571.8px;top:598.34px;font-size:14.6px;color:#dcdcdc;">World</div>
<svg style="left:666px;top:596px;" width="18" height="18" viewBox="0 0 18 18"><path d="M9 1.5 L16 4 V9 C16 13 13 16 9 17 C5 16 2 13 2 9 V4 Z" fill="none" stroke="#a8a8a8" stroke-width="1.3"/></svg>
<svg style="left:691px;top:596px;" width="18" height="18" viewBox="0 0 18 18"><path d="M6 5 H2 V17 H11 V13" fill="none" stroke="#d0d0d0" stroke-width="1.3"/><path d="M6 1.5 H12 L16 5.5 V13 H6 Z" fill="none" stroke="#d0d0d0" stroke-width="1.3"/></svg>
<svg style="left:716px;top:597px;" width="16" height="16" viewBox="0 0 16 16"><path d="M3 3 L13 13 M13 3 L3 13" stroke="#d8d8d8" stroke-width="1.5"/></svg>
<svg style="left:747px;top:597px;" width="19" height="19" viewBox="0 0 19 19"><path d="M11 1.5 L17.5 8 L15.5 9 L12 12.5 L12 15.5 L3.5 7 L6.5 7 L10 3.5Z" fill="none" stroke="#9a9a9a" stroke-width="1.3" stroke-linejoin="round"/><path d="M7 12 L1.5 17.5" stroke="#9a9a9a" stroke-width="1.4"/></svg>
<div class="a" style="left:1161px;top:593px;width:64.5px;height:25px;background:#232323;border-radius:5px;border:1px solid #363636;"></div>
<div class="a" style="left:1162px;top:594px;width:24px;height:23px;background:#545454;border-radius:4px 0 0 4px;"></div>
<svg style="left:1164px;top:596px;" width="19" height="18" viewBox="0 0 19 18"><g transform="translate(19,0) scale(-1,1)"><path d="M8.5 16.5 L3.8 11.8 C1 9 1.5 5 4 3 C6.5 0.8 10.5 1 13 3.5 L17.5 8 M11 13.5 L6.5 9 C5.5 8 5.5 6.5 6.5 5.5 C7.5 4.5 9 4.5 10 5.5 L14.5 10" fill="none" stroke="#b4b4b4" stroke-width="1.5" stroke-linecap="round"/><path d="M8.5 16.5 L11 13.5 M17.5 8 L14.5 10" stroke="#b4b4b4" stroke-width="1.5" stroke-linecap="round"/></g></svg>
<svg style="left:1190px;top:596px;" width="19" height="19" viewBox="0 0 19 19"><path d="M5.5 10.5 V18.5 M14.5 1 V18.5 M10.5 5.5 H18.5 M1 14.5 H18.5" stroke="#d0d0d0" stroke-width="1.1"/><rect x="2" y="2" width="7" height="7" rx="1.2" fill="#e4e4e4"/></svg>
<svg style="left:1213px;top:603.5px;" width="8" height="4.8" viewBox="0 0 8 4.8"><path d="M0.5 0.5 L4.0 4.3 L7.5 0.5" fill="none" stroke="#cfcfcf" stroke-width="1.3"/></svg>
<div class="a" style="left:1232px;top:593px;width:49px;height:25px;background:#232323;border-radius:5px;border:1px solid #363636;"></div>
<div class="a" style="left:1233px;top:594px;width:23.5px;height:23px;background:#4772b3;border-radius:4px 0 0 4px;"></div>
<svg style="left:1235px;top:595px;" width="20" height="20" viewBox="0 0 20 20"><circle cx="12" cy="8" r="6" fill="#f0f0f0"/><path d="M4.5 9 A6 6 0 1 0 13 16" fill="none" stroke="#f0f0f0" stroke-width="1.6"/></svg>
<svg style="left:1264px;top:603.5px;" width="8" height="4.8" viewBox="0 0 8 4.8"><path d="M0.5 0.5 L4.0 4.3 L7.5 0.5" fill="none" stroke="#cfcfcf" stroke-width="1.3"/></svg>
<div class="a" style="left:1px;top:639px;width:8px;height:17px;background:#232323;border-radius:0 4px 4px 0;"></div>
<svg style="left:1.5px;top:643px;" width="5.3999999999999995" height="9" viewBox="0 0 5.3999999999999995 9"><path d="M0.5 0.5 L4.8999999999999995 4.5 L0.5 8.5" fill="none" stroke="#9a9a9a" stroke-width="1.2"/></svg>
<svg style="left:23px;top:636px;" width="19" height="19" viewBox="0 0 19 19"><path d="M5.5 1.5 L0.8 13.5 C0.5 15 2 16 4 16 L7.5 15 L9 8 Z" fill="#dcdcdc"/><circle cx="12.3" cy="14" r="4.6" fill="#1d1d1d" stroke="#dcdcdc" stroke-width="1.4"/><path d="M10 13 A2.5 2.5 0 0 1 12 11" fill="none" stroke="#dcdcdc" stroke-width="1"/><circle cx="14.5" cy="3.3" r="2.6" fill="#dcdcdc"/></svg>
<div class="t" style="left:52.3px;top:639.94px;font-size:14.6px;color:#dcdcdc;">Scene</div>
<svg style="left:114px;top:641px;" width="6.6" height="11" viewBox="0 0 6.6 11"><path d="M0.5 0.5 L6.1 5.5 L0.5 10.5" fill="none" stroke="#d0d0d0" stroke-width="1.3"/></svg>
<svg style="left:133px;top:637px;" width="19" height="19" viewBox="0 0 19 19"><circle cx="9.5" cy="9.5" r="7.6" fill="none" stroke="#dcdcdc" stroke-width="1.4"/><path d="M4 5.5 C6 3 9 2.8 11.5 3.6 L10.8 6 L8.2 8 L8.8 10.2 L6.3 11 L3.2 8.5Z M9 11 L12.5 11.3 L13.5 13.5 L11.3 16.6 L9.8 15.8 L9.8 13Z" fill="#dcdcdc"/><path d="M0.3 18.7 L3.8 15.2 M15.2 3.8 L18.7 0.3" stroke="#dcdcdc" stroke-width="1.4"/></svg>
<div class="t" style="left:162.0px;top:639.94px;font-size:14.6px;color:#dcdcdc;">World</div>
<div class="a" style="left:1283px;top:632px;width:4px;height:125px;background:#2a2a2a;border-radius:2px;"></div>
<div class="a" style="left:1280px;top:637px;width:8px;height:22px;background:#1d1d1d;border-radius:3px;"></div>
<svg style="left:1283px;top:642px;" width="6" height="10" viewBox="0 0 6 10"><path d="M5 0.5 L1 5 L5 9.5" fill="none" stroke="#9a9a9a" stroke-width="1.2"/></svg>
<div class="a" style="left:258px;top:678.6px;width:219px;height:82.39999999999998px;background:#303030;border-radius:5px 5px 0 0;box-shadow:0 0 6px rgba(0,0,0,0.6);"></div>
<div class="a" style="left:258px;top:678.6px;width:219px;height:19px;background:#7b4a1f;border-radius:5px 5px 0 0;"></div>
<svg style="left:268px;top:686.1px;" width="8" height="4.8" viewBox="0 0 8 4.8"><path d="M0.5 0.5 L4.0 4.3 L7.5 0.5" fill="none" stroke="#e0e0e0" stroke-width="1.2"/></svg>
<div class="t" style="left:282.0px;top:681.29px;font-size:11px;color:#e8e8e8;">interior.exr</div>
<div class="a" style="left:539.5px;top:677.3px;width:127px;height:83.70000000000005px;background:#303030;border-radius:5px 5px 0 0;box-shadow:0 0 6px rgba(0,0,0,0.6);"></div>
<div class="a" style="left:539.5px;top:677.3px;width:127px;height:19px;background:#2d6a2d;border-radius:5px 5px 0 0;"></div>
<svg style="left:549.5px;top:684.8px;" width="8" height="4.8" viewBox="0 0 8 4.8"><path d="M0.5 0.5 L4.0 4.3 L7.5 0.5" fill="none" stroke="#e0e0e0" stroke-width="1.2"/></svg>
<div class="t" style="left:563.5px;top:679.99px;font-size:11px;color:#e8e8e8;">Background</div>
<div class="a" style="left:729px;top:681.9px;width:127.7px;height:79.10000000000002px;background:#303030;border-radius:5px 5px 0 0;box-shadow:0 0 6px rgba(0,0,0,0.6);"></div>
<div class="a" style="left:729px;top:681.9px;width:127.7px;height:18.5px;background:#3e1e25;border-radius:5px 5px 0 0;"></div>
<svg style="left:739px;top:689.15px;" width="8" height="4.8" viewBox="0 0 8 4.8"><path d="M0.5 0.5 L4.0 4.3 L7.5 0.5" fill="none" stroke="#e0e0e0" stroke-width="1.2"/></svg>
<div class="t" style="left:753.0px;top:684.59px;font-size:11px;color:#e8e8e8;">World Output</div>
<svg style="left:470px;top:700px;" width="80" height="40" viewBox="0 0 80 40"><path d="M7.3 10.4 C30 10.4 45 31.3 69 31.3" fill="none" stroke="#1d1d1d" stroke-width="4"/><path d="M7.3 10.4 C30 10.4 45 31.3 69 31.3" fill="none" stroke="#c9c133" stroke-width="2"/></svg>
<svg style="left:660px;top:700px;" width="80" height="40" viewBox="0 0 80 40"><path d="M7.6 9 C30 9 45 35.3 68.6 35.3" fill="none" stroke="#1d1d1d" stroke-width="4"/><path d="M7.6 9 C30 9 45 35.3 68.6 35.3" fill="none" stroke="#45c45a" stroke-width="2"/></svg>
<div class="t" style="right:1159.6px;top:704.89px;font-size:11px;color:#dcdcdc;">Color</div>
<svg style="left:472.3px;top:705.4px;" width="10" height="10" viewBox="0 0 10 10"><circle cx="5" cy="5" r="3.9" fill="#c7c32a" stroke="#111" stroke-width="0.9"/></svg>
<div class="a" style="left:267.5px;top:728px;width:200px;height:17px;background:#282828;border-radius:4px;border:1px solid #3a3a3a;"></div>
<div class="a" style="left:296px;top:729px;width:98px;height:15px;background:#1d1d1d;"></div>
<div class="a" style="left:394px;top:729px;width:72.5px;height:15px;background:#545454;border-radius:0 4px 4px 0;"></div>
<div class="a" style="left:412px;top:729px;width:1px;height:15px;background:#474747;"></div>
<div class="a" style="left:430px;top:729px;width:1px;height:15px;background:#474747;"></div>
<div class="a" style="left:448px;top:729px;width:1px;height:15px;background:#474747;"></div>
<svg style="left:270px;top:729px;" width="15" height="15" viewBox="0 0 15 15"><rect x="0.5" y="0.5" width="13" height="13" fill="none" stroke="#dcdcdc" stroke-width="1"/><path d="M1 14 L6 6 L10.5 14Z" fill="#e0e0e0"/><circle cx="10" cy="4" r="1.2" fill="#e0e0e0"/></svg>
<svg style="left:285px;top:734px;" width="6" height="3.5999999999999996" viewBox="0 0 6 3.5999999999999996"><path d="M0.5 0.5 L3.0 3.0999999999999996 L5.5 0.5" fill="none" stroke="#cfcfcf" stroke-width="1.1"/></svg>
<div class="t" style="left:302.0px;top:730.99px;font-size:11px;color:#dcdcdc;">interior.exr</div>
<svg style="left:397px;top:730px;" width="13" height="13" viewBox="0 0 13 13"><path d="M6.5 1 L11.5 3 V6.5 C11.5 9.5 9.5 11.5 6.5 12.5 C3.5 11.5 1.5 9.5 1.5 6.5 V3 Z" fill="none" stroke="#a8a8a8" stroke-width="1"/></svg>
<svg style="left:414px;top:730px;" width="14" height="13" viewBox="0 0 14 13"><path d="M4.5 4 H1.5 V12.5 H8.5 V10" fill="none" stroke="#d0d0d0" stroke-width="1"/><path d="M4.5 1 H9 L12 4 V10 H4.5Z" fill="none" stroke="#d0d0d0" stroke-width="1"/></svg>
<svg style="left:432px;top:731px;" width="14" height="12" viewBox="0 0 14 12"><path d="M1 2 H5.5 L6.5 3.5 H13 V11 H1Z" fill="#dcdcdc"/></svg>
<svg style="left:451px;top:731px;" width="12" height="12" viewBox="0 0 12 12"><path d="M2 2 L10 10 M10 2 L2 10" stroke="#d8d8d8" stroke-width="1.3"/></svg>
<div class="a" style="left:267.5px;top:749.7px;width:200px;height:12px;background:#282828;border-radius:4px;border:1px solid #3a3a3a;"></div>
<div class="t" style="left:276.0px;top:750.69px;font-size:11px;color:#dcdcdc;">Linear</div>
<div class="t" style="right:969.5px;top:703.69px;font-size:11px;color:#dcdcdc;">Background</div>
<svg style="left:662.6px;top:704px;" width="10" height="10" viewBox="0 0 10 10"><circle cx="5" cy="5" r="3.9" fill="#45c45a" stroke="#111" stroke-width="0.9"/></svg>
<div class="t" style="left:549.0px;top:725.49px;font-size:11px;color:#dcdcdc;">Color</div>
<svg style="left:534px;top:726.3px;" width="10" height="10" viewBox="0 0 10 10"><circle cx="5" cy="5" r="3.9" fill="#c7c32a" stroke="#111" stroke-width="0.9"/></svg>
<div class="a" style="left:549px;top:744px;width:108.5px;height:18px;background:#545454;border-radius:4px;"></div>
<div class="t" style="left:565.0px;top:746.19px;font-size:11px;color:#dcdcdc;">Strength</div>
<div class="t" style="right:980.6px;top:746.19px;font-size:11px;color:#dcdcdc;letter-spacing:0.36px;">0.200</div>
<svg style="left:534px;top:746.5px;" width="10" height="10" viewBox="0 0 10 10"><circle cx="5" cy="5" r="3.9" fill="#a0a0a0" stroke="#111" stroke-width="0.9"/></svg>
<div class="a" style="left:738px;top:706px;width:108.6px;height:16.7px;background:#282828;border-radius:4px;border:1px solid #3a3a3a;"></div>
<div class="t" style="left:746.0px;top:709.19px;font-size:11px;color:#dcdcdc;">All</div>
<svg style="left:834px;top:712px;" width="6" height="3.5999999999999996" viewBox="0 0 6 3.5999999999999996"><path d="M0.5 0.5 L3.0 3.0999999999999996 L5.5 0.5" fill="none" stroke="#cfcfcf" stroke-width="1.1"/></svg>
<div class="t" style="left:738.7px;top:729.59px;font-size:11px;color:#dcdcdc;">Surface</div>
<svg style="left:723.6px;top:730.3px;" width="10" height="10" viewBox="0 0 10 10"><circle cx="5" cy="5" r="3.9" fill="#45c45a" stroke="#111" stroke-width="0.9"/></svg>
<div class="t" style="left:738.7px;top:748.69px;font-size:11px;color:#dcdcdc;">Volume</div>
<svg style="left:723.6px;top:749.5px;" width="10" height="10" viewBox="0 0 10 10"><circle cx="5" cy="5" r="3.9" fill="#45c45a" stroke="#111" stroke-width="0.9"/></svg>
<div class="a" style="left:1px;top:7px;width:1291px;height:579px;border:1px solid rgba(255,255,255,0.14);border-radius:6px"></div>
<div class="a" style="left:1295px;top:7px;width:335px;height:327px;border:1px solid rgba(255,255,255,0.14);border-radius:6px"></div>
<div class="a" style="left:1295px;top:337px;width:335px;height:425px;border:1px solid rgba(255,255,255,0.14);border-radius:6px"></div>
<div class="a" style="left:1px;top:589px;width:1291px;height:175px;border:1px solid rgba(255,255,255,0.14);border-radius:6px"></div>
</body></html>
